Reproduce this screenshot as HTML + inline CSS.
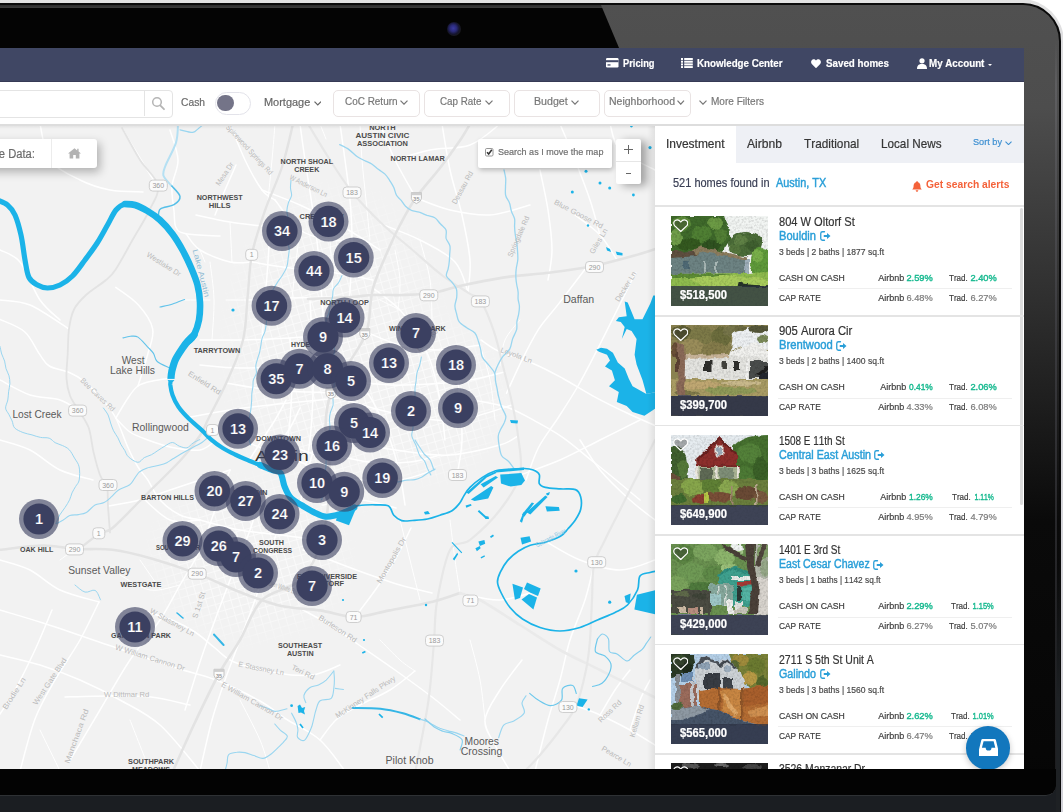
<!DOCTYPE html>
<html lang="en"><head><meta charset="utf-8"><title>Mashvisor – Austin, TX investment property search</title>
<style>
html,body{margin:0;padding:0}
body{width:1063px;height:812px;overflow:hidden;position:relative;background:#fff;font-family:"Liberation Sans",sans-serif}
.t{position:absolute;white-space:pre;line-height:1;font-kerning:none;display:block;-webkit-text-stroke:0.2px currentColor}
.a{position:absolute}
.btn{position:absolute;top:90px;height:25px;border:1px solid #e9e3e3;border-radius:5px;background:#fff}
</style></head><body>

<div class="a" style="left:-60px;top:-1px;width:1123.500px;height:830px;border-radius:0 43px 0 0;background:linear-gradient(#e2e2e2,#dadade 10%,#d2d2d8)"></div>
<div class="a" id="bezel" style="left:-60px;top:3px;width:1117px;height:860px;border:2px solid #0b0b0b;border-radius:0 38px 0 0;background:#040404;overflow:hidden">
  <div class="a" style="left:0;top:0;width:1117px;height:3px;background:linear-gradient(#2a2a2a,#3c3c3c)"></div>
  <svg class="a" style="left:0;top:0" width="1117" height="860" viewBox="-60 5 1117 860">
    <defs><linearGradient id="sheen" x1="0" y1="0" x2="0" y2="1">
      <stop offset="0" stop-color="#505050"/><stop offset="0.12" stop-color="#4d4d4d"/><stop offset="0.35" stop-color="#2e2e2e"/><stop offset="0.6" stop-color="#0a0a0a"/><stop offset="1" stop-color="#040404"/></linearGradient></defs>
    <polygon points="599,5 1060,5 1060,865 960,865" fill="url(#sheen)"/>
  </svg>
</div>
<div class="a" style="left:1054.500px;top:40px;width:2.500px;height:740px;background:linear-gradient(rgba(120,120,125,0),rgba(110,110,115,.5) 6%,rgba(70,70,76,.6) 40%,rgba(50,50,55,.5))"></div>

<div class="a" style="left:447px;top:22px;width:14px;height:14px;border-radius:50%;background:radial-gradient(circle at 45% 45%,#3a3aa0 0,#2a2a78 30%,#15152e 55%,#1a1a1a 75%,#0a0a0a 100%)"></div>
<div class="a" id="screen" style="left:0;top:48px;width:1024px;height:721px;background:#fff;overflow:hidden"></div>
<div class="a" style="left:0;top:48px;width:1024px;height:33px;background:#404764;border-bottom:1px solid #363a55"></div>
<div class="a" style="left:0;top:82px;width:1024px;height:42px;background:#fff"></div>
<div class="a" style="left:0;top:124px;width:655px;height:645px;background:#f1f1f1"></div>
<div class="a" style="left:655px;top:124px;width:369px;height:645px;background:#fff"></div>
<svg class="a" style="left:606px;top:58px" width="13" height="10" viewBox="0 0 13 10"><rect x="0" y="0" width="12.5" height="9.5" rx="1.2" fill="#fff"/><rect x="0" y="2.2" width="12.5" height="2" fill="#414866"/><rect x="1.5" y="6.3" width="3" height="1.3" fill="#414866"/></svg>
<span class="t" style="left:622.50px;top:58.27px;font-size:11.5px;font-weight:700;color:#fff;transform:scaleX(0.8080);transform-origin:0 0;">Pricing</span>
<svg class="a" style="left:681px;top:58px" width="12" height="10" viewBox="0 0 12 10" fill="#fff"><rect x="0" y="0" width="2" height="2"/><rect x="3.2" y="0" width="8.6" height="2"/><rect x="0" y="2.7" width="2" height="2"/><rect x="3.2" y="2.7" width="8.6" height="2"/><rect x="0" y="5.4" width="2" height="2"/><rect x="3.2" y="5.4" width="8.6" height="2"/><rect x="0" y="8.1" width="2" height="1.9"/><rect x="3.2" y="8.1" width="8.6" height="1.9"/></svg>
<span class="t" style="left:697.00px;top:58.27px;font-size:11.5px;font-weight:700;color:#fff;transform:scaleX(0.8468);transform-origin:0 0;">Knowledge Center</span>
<svg class="a" style="left:811px;top:58.5px" width="10" height="9.5" viewBox="0 0 20 19"><path d="M10 18.5 L1.6 10 C-0.8 7.2 0 3.2 2.6 1.4 C5 -0.2 8.2 0.4 10 3.2 C11.800 0.4 15 -0.2 17.4 1.4 C20 3.2 20.8 7.2 18.4 10 Z" fill="#fff"/></svg>
<span class="t" style="left:826.00px;top:58.27px;font-size:11.5px;font-weight:700;color:#fff;transform:scaleX(0.8496);transform-origin:0 0;">Saved homes</span>
<svg class="a" style="left:916.5px;top:57.5px" width="10" height="11" viewBox="0 0 20 22"><circle cx="10" cy="5.6" r="5.2" fill="#fff"/><path d="M0 22 C0 14.500 4 12.500 7 11.800 L13 11.800 C16 12.500 20 14.500 20 22 Z" fill="#fff"/></svg>
<span class="t" style="left:929.00px;top:58.27px;font-size:11.5px;font-weight:700;color:#fff;transform:scaleX(0.8494);transform-origin:0 0;">My Account</span>
<div class="a" style="left:987.5px;top:64px;width:0;height:0;border-left:2.5px solid transparent;border-right:2.5px solid transparent;border-top:2.5px solid #fff"></div>
<div class="a" style="left:0;top:123.500px;width:1024px;height:2px;background:#dddddd;z-index:3"></div><div class="a" style="left:0;top:125.500px;width:655px;height:3px;background:linear-gradient(rgba(0,0,0,.06),rgba(0,0,0,0));z-index:3"></div>
<div class="a" style="left:-10px;top:89.5px;width:181px;height:26px;border:1px solid #e4e4e4;border-radius:4px;background:#fff"></div>
<div class="a" style="left:144px;top:90px;width:1px;height:26px;background:#e4e4e4"></div>
<svg class="a" style="left:151px;top:96px" width="15" height="15" viewBox="0 0 15 15"><circle cx="6" cy="6" r="4.3" fill="none" stroke="#b5b5b5" stroke-width="1.5"/><path d="M9.200 9.400 L13 13.200" stroke="#b5b5b5" stroke-width="1.800" stroke-linecap="round"/></svg>
<span class="t" style="left:181.00px;top:96.97px;font-size:11.5px;font-weight:400;color:#6a6a6a;transform:scaleX(0.8935);transform-origin:0 0;">Cash</span>
<div class="a" style="left:215px;top:91.5px;width:34px;height:21px;border:1px solid #e3e3ea;border-radius:11.500px;background:#fff"></div>
<div class="a" style="left:217px;top:94.5px;width:16.500px;height:16.500px;border-radius:50%;background:#747488"></div>
<span class="t" style="left:263.75px;top:96.77px;font-size:11.5px;font-weight:400;color:#666;transform:scaleX(0.9518);transform-origin:0 0;">Mortgage</span>
<svg class="a" style="left:313.75px;top:101px" width="7.5" height="5" viewBox="0 0 7.5 5"><path d="M0.5 0.6 L3.75 4 L7.0 0.6" fill="none" stroke="#666" stroke-width="1.2"/></svg>
<div class="btn" style="left:333px;width:85px"></div>
<div class="btn" style="left:423.75px;width:84.5px"></div>
<div class="btn" style="left:514px;width:84px"></div>
<div class="btn" style="left:604px;width:85px"></div>
<span class="t" style="left:344.50px;top:96.49px;font-size:11px;font-weight:400;color:#777;transform:scaleX(0.9040);transform-origin:0 0;">CoC Return</span>
<svg class="a" style="left:400px;top:100px" width="8" height="5.2" viewBox="0 0 8 5.2"><path d="M0.5 0.6 L4.0 4.2 L7.5 0.6" fill="none" stroke="#777" stroke-width="1.2"/></svg>
<span class="t" style="left:439.50px;top:96.49px;font-size:11px;font-weight:400;color:#777;transform:scaleX(0.8928);transform-origin:0 0;">Cap Rate</span>
<svg class="a" style="left:484.5px;top:100px" width="8" height="5.2" viewBox="0 0 8 5.2"><path d="M0.5 0.6 L4.0 4.2 L7.5 0.6" fill="none" stroke="#777" stroke-width="1.2"/></svg>
<span class="t" style="left:533.75px;top:96.49px;font-size:11px;font-weight:400;color:#777;transform:scaleX(0.9677);transform-origin:0 0;">Budget</span>
<svg class="a" style="left:571px;top:100px" width="8" height="5.2" viewBox="0 0 8 5.2"><path d="M0.5 0.6 L4.0 4.2 L7.5 0.6" fill="none" stroke="#777" stroke-width="1.2"/></svg>
<span class="t" style="left:609.00px;top:96.49px;font-size:11px;font-weight:400;color:#777;transform:scaleX(0.9548);transform-origin:0 0;">Neighborhood</span>
<svg class="a" style="left:677px;top:100px" width="7.5" height="5.2" viewBox="0 0 7.5 5.2"><path d="M0.5 0.6 L3.75 4.2 L7.0 0.6" fill="none" stroke="#777" stroke-width="1.2"/></svg>
<svg class="a" style="left:699px;top:100px" width="8" height="5.2" viewBox="0 0 8 5.2"><path d="M0.5 0.6 L4.0 4.2 L7.5 0.6" fill="none" stroke="#777" stroke-width="1.2"/></svg>
<span class="t" style="left:711.00px;top:96.49px;font-size:11px;font-weight:400;color:#777;transform:scaleX(0.9128);transform-origin:0 0;">More Filters</span>
<svg class="a" style="left:0;top:124px" width="655" height="645" viewBox="0 124 655 645">
<rect x="0" y="124" width="655" height="645" fill="#f2f2f2"/>
<defs><pattern id="grid" width="8" height="8" patternUnits="userSpaceOnUse" patternTransform="rotate(-16)"><path d="M0 0.500 H8 M0.500 0 V8" stroke="#fff" stroke-width="0.900" fill="none"/></pattern><radialGradient id="gm1" cx="0.500" cy="0.500" r="0.500"><stop offset="0" stop-color="#fff" stop-opacity="1"/><stop offset="0.600" stop-color="#fff" stop-opacity="0.800"/><stop offset="1" stop-color="#fff" stop-opacity="0"/></radialGradient><mask id="gmask"><ellipse cx="335" cy="350" rx="120" ry="175" fill="url(#gm1)"/><ellipse cx="250" cy="560" rx="110" ry="90" fill="url(#gm1)"/><ellipse cx="430" cy="400" rx="80" ry="90" fill="url(#gm1)"/></mask></defs>
<rect x="0" y="124" width="655" height="645" fill="url(#grid)" mask="url(#gmask)" opacity="0.750"/>
<path d="M122.0 128.0 C124.2 131.7 130.2 142.0 135.0 150.0 C139.8 158.0 147.2 170.0 151.0 176.0 C154.8 182.0 156.8 184.3 158.0 186.0" fill="none" stroke="#fff" stroke-width="1.5" stroke-linecap="round" stroke-linejoin="round"/>
<path d="M220.0 236.0 C214.3 235.6 193.3 235.1 186.0 233.7 C178.7 232.3 178.0 231.3 176.0 227.5 C174.0 223.7 174.7 217.9 174.0 211.0 C173.3 204.1 171.3 194.5 172.0 186.0 C172.7 177.5 178.3 169.3 178.0 160.0 C177.7 150.7 171.3 135.0 170.0 130.0" fill="none" stroke="#fff" stroke-width="1.5" stroke-linecap="round" stroke-linejoin="round"/>
<path d="M186.0 233.7 C188.3 236.4 192.7 245.3 200.0 250.0 C207.3 254.7 221.3 260.0 230.0 262.0 C238.7 264.0 248.3 262.0 252.0 262.0" fill="none" stroke="#fff" stroke-width="1.5" stroke-linecap="round" stroke-linejoin="round"/>
<path d="M230.0 124.0 C232.5 130.0 239.7 149.0 245.0 160.0 C250.3 171.0 257.0 183.3 262.0 190.0 C267.0 196.7 272.8 198.3 275.0 200.0" fill="none" stroke="#fff" stroke-width="1.5" stroke-linecap="round" stroke-linejoin="round"/>
<path d="M236.0 165.0 C234.2 169.2 228.5 181.7 225.0 190.0 C221.5 198.3 216.7 210.8 215.0 215.0" fill="none" stroke="#fff" stroke-width="1.5" stroke-linecap="round" stroke-linejoin="round"/>
<path d="M196.0 215.0 C201.7 216.2 219.0 220.2 230.0 222.0 C241.0 223.8 256.7 225.3 262.0 226.0" fill="none" stroke="#fff" stroke-width="1.5" stroke-linecap="round" stroke-linejoin="round"/>
<path d="M262.0 190.0 C268.3 192.5 287.0 199.2 300.0 205.0 C313.0 210.8 326.7 217.5 340.0 225.0 C353.3 232.5 373.3 245.8 380.0 250.0" fill="none" stroke="#fff" stroke-width="1.5" stroke-linecap="round" stroke-linejoin="round"/>
<path d="M300.0 124.0 C300.8 130.0 303.0 146.5 305.0 160.0 C307.0 173.5 309.8 190.0 312.0 205.0 C314.2 220.0 316.3 234.2 318.0 250.0 C319.7 265.8 320.8 285.0 322.0 300.0 C323.2 315.0 324.5 333.3 325.0 340.0" fill="none" stroke="#fff" stroke-width="1.5" stroke-linecap="round" stroke-linejoin="round"/>
<path d="M340.0 124.0 C340.8 130.0 343.3 147.3 345.0 160.0 C346.7 172.7 348.8 186.7 350.0 200.0 C351.2 213.3 352.0 225.0 352.0 240.0 C352.0 255.0 351.2 275.0 350.0 290.0 C348.8 305.0 345.8 323.3 345.0 330.0" fill="none" stroke="#fff" stroke-width="1.5" stroke-linecap="round" stroke-linejoin="round"/>
<path d="M275.0 200.0 C279.2 205.0 290.8 223.3 300.0 230.0 C309.2 236.7 321.3 238.3 330.0 240.0 C338.7 241.7 348.3 240.0 352.0 240.0" fill="none" stroke="#fff" stroke-width="1.5" stroke-linecap="round" stroke-linejoin="round"/>
<path d="M252.0 262.0 C258.3 263.0 277.0 266.3 290.0 268.0 C303.0 269.7 316.2 270.0 330.0 272.0 C343.8 274.0 365.8 278.7 373.0 280.0" fill="none" stroke="#fff" stroke-width="1.5" stroke-linecap="round" stroke-linejoin="round"/>
<path d="M248.0 300.0 C255.0 299.7 276.3 298.5 290.0 298.0 C303.7 297.5 323.3 297.2 330.0 297.0" fill="none" stroke="#fff" stroke-width="1.5" stroke-linecap="round" stroke-linejoin="round"/>
<path d="M200.0 340.0 C207.2 340.0 228.0 340.3 243.0 340.0 C258.0 339.7 275.5 338.8 290.0 338.0 C304.5 337.2 317.3 336.0 330.0 335.0 C342.7 334.0 360.0 332.5 366.0 332.0" fill="none" stroke="#fff" stroke-width="1.5" stroke-linecap="round" stroke-linejoin="round"/>
<path d="M200.0 365.0 C206.7 365.5 225.0 367.8 240.0 368.0 C255.0 368.2 273.3 367.0 290.0 366.0 C306.7 365.0 331.7 362.7 340.0 362.0" fill="none" stroke="#fff" stroke-width="1.5" stroke-linecap="round" stroke-linejoin="round"/>
<path d="M226.0 383.0 C233.3 384.2 256.0 388.5 270.0 390.0 C284.0 391.5 299.8 391.5 310.0 392.0 C320.2 392.5 327.5 392.8 331.0 393.0" fill="none" stroke="#fff" stroke-width="1.5" stroke-linecap="round" stroke-linejoin="round"/>
<path d="M190.0 417.0 C196.7 415.8 216.7 412.0 230.0 410.0 C243.3 408.0 255.0 406.7 270.0 405.0 C285.0 403.3 308.3 401.2 320.0 400.0 C331.7 398.8 336.7 398.3 340.0 398.0" fill="none" stroke="#fff" stroke-width="1.5" stroke-linecap="round" stroke-linejoin="round"/>
<path d="M290.0 338.0 C290.3 345.0 292.0 366.3 292.0 380.0 C292.0 393.7 291.0 408.3 290.0 420.0 C289.0 431.7 286.7 445.0 286.0 450.0" fill="none" stroke="#fff" stroke-width="1.5" stroke-linecap="round" stroke-linejoin="round"/>
<path d="M310.0 300.0 C310.3 306.7 311.5 324.7 312.0 340.0 C312.5 355.3 313.3 375.3 313.0 392.0 C312.7 408.7 311.3 427.0 310.0 440.0 C308.7 453.0 305.8 465.0 305.0 470.0" fill="none" stroke="#fff" stroke-width="1.5" stroke-linecap="round" stroke-linejoin="round"/>
<path d="M270.0 226.0 C269.7 232.0 268.8 249.7 268.0 262.0 C267.2 274.3 266.0 287.0 265.0 300.0 C264.0 313.0 262.5 333.3 262.0 340.0" fill="none" stroke="#fff" stroke-width="1.5" stroke-linecap="round" stroke-linejoin="round"/>
<path d="M380.0 124.0 C382.5 130.0 389.0 147.7 395.0 160.0 C401.0 172.3 412.5 191.7 416.0 198.0" fill="none" stroke="#fff" stroke-width="1.5" stroke-linecap="round" stroke-linejoin="round"/>
<path d="M416.0 198.0 C421.7 200.0 437.7 207.2 450.0 210.0 C462.3 212.8 476.7 215.8 490.0 215.0 C503.3 214.2 523.3 206.7 530.0 205.0" fill="none" stroke="#fff" stroke-width="1.5" stroke-linecap="round" stroke-linejoin="round"/>
<path d="M395.0 160.0 C400.8 158.3 417.5 152.5 430.0 150.0 C442.5 147.5 458.3 149.3 470.0 145.0 C481.7 140.7 495.0 127.5 500.0 124.0" fill="none" stroke="#fff" stroke-width="1.5" stroke-linecap="round" stroke-linejoin="round"/>
<path d="M442.0 124.0 C443.3 131.7 446.7 154.8 450.0 170.0 C453.3 185.2 458.7 200.0 462.0 215.0 C465.3 230.0 469.0 247.2 470.0 260.0 C471.0 272.8 468.3 286.7 468.0 292.0" fill="none" stroke="#fff" stroke-width="1.5" stroke-linecap="round" stroke-linejoin="round"/>
<path d="M381.0 224.0 C387.5 226.7 407.7 233.7 420.0 240.0 C432.3 246.3 447.0 253.3 455.0 262.0 C463.0 270.7 465.8 287.0 468.0 292.0" fill="none" stroke="#fff" stroke-width="1.5" stroke-linecap="round" stroke-linejoin="round"/>
<path d="M373.0 288.0 C377.5 291.7 392.8 302.5 400.0 310.0 C407.2 317.5 411.0 324.7 416.0 333.0 C421.0 341.3 426.0 348.8 430.0 360.0 C434.0 371.2 437.5 386.7 440.0 400.0 C442.5 413.3 444.2 433.3 445.0 440.0" fill="none" stroke="#fff" stroke-width="1.5" stroke-linecap="round" stroke-linejoin="round"/>
<path d="M366.0 332.0 C371.7 334.2 387.7 342.0 400.0 345.0 C412.3 348.0 426.7 350.0 440.0 350.0 C453.3 350.0 473.3 345.8 480.0 345.0" fill="none" stroke="#fff" stroke-width="1.5" stroke-linecap="round" stroke-linejoin="round"/>
<path d="M350.0 381.0 C356.7 381.7 376.7 384.5 390.0 385.0 C403.3 385.5 416.7 384.8 430.0 384.0 C443.3 383.2 457.5 382.0 470.0 380.0 C482.5 378.0 499.2 373.3 505.0 372.0" fill="none" stroke="#fff" stroke-width="1.5" stroke-linecap="round" stroke-linejoin="round"/>
<path d="M340.0 398.0 C346.7 400.0 366.7 406.7 380.0 410.0 C393.3 413.3 406.7 416.3 420.0 418.0 C433.3 419.7 444.7 422.2 460.0 420.0 C475.3 417.8 503.3 407.5 512.0 405.0" fill="none" stroke="#fff" stroke-width="1.5" stroke-linecap="round" stroke-linejoin="round"/>
<path d="M331.0 430.0 C337.5 432.5 356.8 441.3 370.0 445.0 C383.2 448.7 396.7 450.3 410.0 452.0 C423.3 453.7 435.0 456.2 450.0 455.0 C465.0 453.8 488.7 448.2 500.0 445.0 C511.3 441.8 515.0 437.5 518.0 436.0" fill="none" stroke="#fff" stroke-width="1.5" stroke-linecap="round" stroke-linejoin="round"/>
<path d="M347.0 366.0 C351.2 371.7 364.8 387.7 372.0 400.0 C379.2 412.3 385.3 427.5 390.0 440.0 C394.7 452.5 397.5 464.2 400.0 475.0 C402.5 485.8 404.2 500.0 405.0 505.0" fill="none" stroke="#fff" stroke-width="1.5" stroke-linecap="round" stroke-linejoin="round"/>
<path d="M456.0 365.0 C456.7 370.8 459.0 387.5 460.0 400.0 C461.0 412.5 462.3 428.3 462.0 440.0 C461.7 451.7 458.7 465.0 458.0 470.0" fill="none" stroke="#fff" stroke-width="1.5" stroke-linecap="round" stroke-linejoin="round"/>
<path d="M540.0 170.0 C541.3 176.7 546.0 196.7 548.0 210.0 C550.0 223.3 552.0 238.3 552.0 250.0 C552.0 261.7 548.7 275.0 548.0 280.0" fill="none" stroke="#fff" stroke-width="1.5" stroke-linecap="round" stroke-linejoin="round"/>
<path d="M481.0 340.0 C484.0 341.9 490.2 347.4 499.0 351.4 C507.8 355.3 522.9 359.2 533.6 363.7 C544.3 368.2 553.1 373.1 563.0 378.5 C572.9 383.9 582.0 390.1 592.7 395.8 C603.4 401.6 615.8 407.7 627.0 413.0 C638.2 418.3 654.5 425.3 660.0 427.8" fill="none" stroke="#fff" stroke-width="1.5" stroke-linecap="round" stroke-linejoin="round"/>
<path d="M458.0 400.0 C461.2 400.1 468.5 399.4 477.0 400.7 C485.5 402.0 498.8 404.3 509.0 408.0 C519.2 411.7 529.5 418.0 538.5 422.9 C547.5 427.8 554.8 431.9 563.0 437.6 C571.2 443.3 579.6 450.7 587.8 457.3 C596.0 463.9 603.7 469.9 612.4 477.0 C621.1 484.1 635.4 496.2 640.0 500.0" fill="none" stroke="#fff" stroke-width="1.5" stroke-linecap="round" stroke-linejoin="round"/>
<path d="M636.0 273.0 C635.3 274.2 635.1 273.9 632.0 280.0 C628.9 286.1 623.0 298.1 617.3 309.6 C611.6 321.1 604.1 336.3 597.6 349.0 C591.1 361.7 584.6 374.5 578.0 386.0 C571.4 397.5 564.6 407.8 558.0 418.0 C551.4 428.2 543.8 437.2 538.5 447.5 C533.2 457.8 528.1 474.6 526.0 480.0" fill="none" stroke="#fff" stroke-width="1.5" stroke-linecap="round" stroke-linejoin="round"/>
<path d="M586.0 268.0 C581.3 274.1 565.9 294.4 558.0 304.6 C550.1 314.8 544.6 319.9 538.5 329.3 C532.4 338.8 526.6 350.6 521.3 361.3 C516.0 372.0 509.0 388.0 506.5 393.3" fill="none" stroke="#fff" stroke-width="1.5" stroke-linecap="round" stroke-linejoin="round"/>
<path d="M575.0 215.0 C579.2 218.3 593.0 227.5 600.0 235.0 C607.0 242.5 614.2 255.8 617.0 260.0" fill="none" stroke="#fff" stroke-width="1.5" stroke-linecap="round" stroke-linejoin="round"/>
<path d="M560.0 124.0 C562.5 130.0 570.0 147.3 575.0 160.0 C580.0 172.7 585.8 187.5 590.0 200.0 C594.2 212.5 598.3 229.2 600.0 235.0" fill="none" stroke="#fff" stroke-width="1.5" stroke-linecap="round" stroke-linejoin="round"/>
<path d="M610.0 124.0 C611.7 128.3 612.5 142.3 620.0 150.0 C627.5 157.7 649.2 166.7 655.0 170.0" fill="none" stroke="#fff" stroke-width="1.5" stroke-linecap="round" stroke-linejoin="round"/>
<path d="M520.0 475.0 C526.7 472.5 546.7 465.8 560.0 460.0 C573.3 454.2 586.7 446.7 600.0 440.0 C613.3 433.3 633.3 423.3 640.0 420.0" fill="none" stroke="#fff" stroke-width="1.5" stroke-linecap="round" stroke-linejoin="round"/>
<path d="M580.0 440.0 C583.3 445.0 591.7 460.0 600.0 470.0 C608.3 480.0 620.8 491.7 630.0 500.0 C639.2 508.3 650.8 516.7 655.0 520.0" fill="none" stroke="#fff" stroke-width="1.5" stroke-linecap="round" stroke-linejoin="round"/>
<path d="M545.0 541.0 C550.8 544.2 567.5 555.2 580.0 560.0 C592.5 564.8 607.5 570.0 620.0 570.0 C632.5 570.0 649.2 561.7 655.0 560.0" fill="none" stroke="#fff" stroke-width="1.5" stroke-linecap="round" stroke-linejoin="round"/>
<path d="M250.0 459.0 C252.0 455.8 257.8 446.5 262.0 440.0 C266.2 433.5 271.0 426.7 275.0 420.0 C279.0 413.3 284.2 403.3 286.0 400.0" fill="none" stroke="#fff" stroke-width="1.5" stroke-linecap="round" stroke-linejoin="round"/>
<path d="M262.0 470.0 C264.2 466.7 270.3 457.0 275.0 450.0 C279.7 443.0 285.8 435.0 290.0 428.0 C294.2 421.0 298.3 411.3 300.0 408.0" fill="none" stroke="#fff" stroke-width="1.5" stroke-linecap="round" stroke-linejoin="round"/>
<path d="M240.0 440.0 C243.7 441.3 253.7 445.0 262.0 448.0 C270.3 451.0 280.3 454.3 290.0 458.0 C299.7 461.7 315.0 468.0 320.0 470.0" fill="none" stroke="#fff" stroke-width="1.5" stroke-linecap="round" stroke-linejoin="round"/>
<path d="M232.0 430.0 C236.3 431.0 248.3 433.3 258.0 436.0 C267.7 438.7 278.8 442.3 290.0 446.0 C301.2 449.7 319.2 456.0 325.0 458.0" fill="none" stroke="#fff" stroke-width="1.5" stroke-linecap="round" stroke-linejoin="round"/>
<path d="M300.0 505.0 C300.8 500.8 303.0 488.3 305.0 480.0 C307.0 471.7 309.8 463.3 312.0 455.0 C314.2 446.7 317.0 434.2 318.0 430.0" fill="none" stroke="#fff" stroke-width="1.5" stroke-linecap="round" stroke-linejoin="round"/>
<path d="M330.0 475.0 C335.0 475.8 348.3 479.2 360.0 480.0 C371.7 480.8 387.7 481.7 400.0 480.0 C412.3 478.3 428.3 471.7 434.0 470.0" fill="none" stroke="#fff" stroke-width="1.5" stroke-linecap="round" stroke-linejoin="round"/>
<path d="M322.0 505.0 C328.3 504.2 347.7 499.5 360.0 500.0 C372.3 500.5 390.0 506.7 396.0 508.0" fill="none" stroke="#fff" stroke-width="1.5" stroke-linecap="round" stroke-linejoin="round"/>
<path d="M335.0 455.0 C340.8 456.2 357.5 460.8 370.0 462.0 C382.5 463.2 398.3 463.2 410.0 462.0 C421.7 460.8 435.0 456.2 440.0 455.0" fill="none" stroke="#fff" stroke-width="1.5" stroke-linecap="round" stroke-linejoin="round"/>
<path d="M286.0 485.0 C285.0 490.8 283.0 507.5 280.0 520.0 C277.0 532.5 272.2 546.7 268.0 560.0 C263.8 573.3 259.7 586.7 255.0 600.0 C250.3 613.3 245.0 626.7 240.0 640.0 C235.0 653.3 229.7 666.7 225.0 680.0 C220.3 693.3 216.2 704.8 212.0 720.0 C207.8 735.2 202.0 762.5 200.0 771.0" fill="none" stroke="#fff" stroke-width="1.5" stroke-linecap="round" stroke-linejoin="round"/>
<path d="M262.0 490.0 C260.0 496.7 255.0 515.8 250.0 530.0 C245.0 544.2 237.8 560.0 232.0 575.0 C226.2 590.0 220.3 605.5 215.0 620.0 C209.7 634.5 205.0 647.0 200.0 662.0 C195.0 677.0 187.5 702.0 185.0 710.0" fill="none" stroke="#fff" stroke-width="1.5" stroke-linecap="round" stroke-linejoin="round"/>
<path d="M230.0 470.0 C227.5 476.7 220.0 496.7 215.0 510.0 C210.0 523.3 205.8 537.5 200.0 550.0 C194.2 562.5 186.7 573.3 180.0 585.0 C173.3 596.7 168.3 607.5 160.0 620.0 C151.7 632.5 140.0 645.0 130.0 660.0 C120.0 675.0 110.2 693.0 100.0 710.0 C89.8 727.0 74.2 753.3 69.0 762.0" fill="none" stroke="#fff" stroke-width="1.5" stroke-linecap="round" stroke-linejoin="round"/>
<path d="M200.0 520.0 C206.7 521.7 226.7 527.5 240.0 530.0 C253.3 532.5 266.3 533.3 280.0 535.0 C293.7 536.7 315.0 539.2 322.0 540.0" fill="none" stroke="#fff" stroke-width="1.5" stroke-linecap="round" stroke-linejoin="round"/>
<path d="M303.0 550.0 C307.5 551.7 320.7 556.5 330.0 560.0 C339.3 563.5 347.3 566.8 359.0 571.0 C370.7 575.2 387.8 581.3 400.0 585.0 C412.2 588.7 426.7 591.7 432.0 593.0" fill="none" stroke="#fff" stroke-width="1.5" stroke-linecap="round" stroke-linejoin="round"/>
<path d="M411.0 528.0 C408.3 533.3 400.8 549.8 395.0 560.0 C389.2 570.2 382.7 579.5 376.0 589.0 C369.3 598.5 358.5 612.3 355.0 617.0" fill="none" stroke="#fff" stroke-width="1.5" stroke-linecap="round" stroke-linejoin="round"/>
<path d="M303.0 610.0 C307.5 612.5 320.7 619.2 330.0 625.0 C339.3 630.8 348.2 637.5 359.0 645.0 C369.8 652.5 382.8 661.3 395.0 670.0 C407.2 678.7 421.2 688.7 432.0 697.0 C442.8 705.3 455.3 716.2 460.0 720.0" fill="none" stroke="#fff" stroke-width="1.5" stroke-linecap="round" stroke-linejoin="round"/>
<path d="M147.0 612.0 C151.2 613.3 164.0 616.7 172.0 620.0 C180.0 623.3 187.8 627.3 195.0 632.0 C202.2 636.7 208.5 643.0 215.0 648.0 C221.5 653.0 223.7 657.8 234.0 662.0 C244.3 666.2 264.0 670.8 277.0 673.0 C290.0 675.2 301.5 676.3 312.0 675.0 C322.5 673.7 335.3 666.7 340.0 665.0" fill="none" stroke="#fff" stroke-width="1.5" stroke-linecap="round" stroke-linejoin="round"/>
<path d="M0.0 610.0 C7.2 612.2 25.0 617.2 43.0 623.0 C61.0 628.8 86.3 637.7 108.0 645.0 C129.7 652.3 155.0 661.2 173.0 667.0 C191.0 672.8 201.5 674.3 216.0 680.0 C230.5 685.7 248.3 694.5 260.0 701.0 C271.7 707.5 276.0 712.5 286.0 719.0 C296.0 725.5 310.2 731.3 320.0 740.0 C329.8 748.7 340.8 765.8 345.0 771.0" fill="none" stroke="#fff" stroke-width="1.5" stroke-linecap="round" stroke-linejoin="round"/>
<path d="M65.0 697.0 C72.5 696.8 95.7 696.0 110.0 696.0 C124.3 696.0 137.7 695.5 151.0 697.0 C164.3 698.5 183.5 703.7 190.0 705.0" fill="none" stroke="#fff" stroke-width="1.5" stroke-linecap="round" stroke-linejoin="round"/>
<path d="M99.0 602.0 C95.8 608.3 87.3 627.0 80.0 640.0 C72.7 653.0 62.5 666.8 55.0 680.0 C47.5 693.2 40.8 703.8 35.0 719.0 C29.2 734.2 22.5 762.3 20.0 771.0" fill="none" stroke="#fff" stroke-width="1.5" stroke-linecap="round" stroke-linejoin="round"/>
<path d="M52.0 610.0 C49.2 616.7 41.2 636.7 35.0 650.0 C28.8 663.3 20.8 679.3 15.0 690.0 C9.2 700.7 2.5 710.0 0.0 714.0" fill="none" stroke="#fff" stroke-width="1.5" stroke-linecap="round" stroke-linejoin="round"/>
<path d="M0.0 655.0 C6.7 656.7 26.7 660.8 40.0 665.0 C53.3 669.2 66.7 674.2 80.0 680.0 C93.3 685.8 106.7 692.5 120.0 700.0 C133.3 707.5 146.7 713.2 160.0 725.0 C173.3 736.8 193.3 763.3 200.0 771.0" fill="none" stroke="#fff" stroke-width="1.5" stroke-linecap="round" stroke-linejoin="round"/>
<path d="M415.0 671.0 C410.8 674.2 399.2 684.3 390.0 690.0 C380.8 695.7 368.8 700.2 360.0 705.0 C351.2 709.8 343.7 713.2 337.0 719.0 C330.3 724.8 322.8 736.5 320.0 740.0" fill="none" stroke="#fff" stroke-width="1.5" stroke-linecap="round" stroke-linejoin="round"/>
<path d="M460.0 593.0 C466.7 594.2 486.7 600.5 500.0 600.0 C513.3 599.5 533.3 591.7 540.0 590.0" fill="none" stroke="#fff" stroke-width="1.5" stroke-linecap="round" stroke-linejoin="round"/>
<path d="M594.0 565.0 C592.5 570.8 589.0 587.5 585.0 600.0 C581.0 612.5 574.2 626.7 570.0 640.0 C565.8 653.3 563.7 666.7 560.0 680.0 C556.3 693.3 552.2 704.8 548.0 720.0 C543.8 735.2 537.2 762.5 535.0 771.0" fill="none" stroke="#fff" stroke-width="1.5" stroke-linecap="round" stroke-linejoin="round"/>
<path d="M576.0 706.0 C580.0 707.5 591.0 711.0 600.0 715.0 C609.0 719.0 620.8 725.0 630.0 730.0 C639.2 735.0 650.8 742.5 655.0 745.0" fill="none" stroke="#fff" stroke-width="1.5" stroke-linecap="round" stroke-linejoin="round"/>
<path d="M600.0 715.0 C602.5 710.8 610.0 697.5 615.0 690.0 C620.0 682.5 627.5 673.3 630.0 670.0" fill="none" stroke="#fff" stroke-width="1.5" stroke-linecap="round" stroke-linejoin="round"/>
<path d="M630.0 730.0 C631.7 725.0 636.7 708.3 640.0 700.0 C643.3 691.7 648.3 683.3 650.0 680.0" fill="none" stroke="#fff" stroke-width="1.5" stroke-linecap="round" stroke-linejoin="round"/>
<path d="M522.0 660.0 C518.3 665.0 506.2 680.0 500.0 690.0 C493.8 700.0 485.8 710.8 485.0 720.0 C484.2 729.2 490.8 736.5 495.0 745.0 C499.2 753.5 507.5 766.7 510.0 771.0" fill="none" stroke="#fff" stroke-width="1.5" stroke-linecap="round" stroke-linejoin="round"/>
<path d="M0.0 319.4 C4.1 321.4 18.0 325.9 24.6 331.7 C31.2 337.4 35.3 348.2 39.4 353.9 C43.5 359.6 44.4 362.9 49.3 366.0 C54.2 369.1 63.3 369.9 69.0 372.4 C74.7 374.9 78.0 376.3 83.7 381.0 C89.4 385.7 98.1 394.5 103.4 400.7 C108.8 406.9 111.7 410.2 115.8 418.0 C119.9 425.8 124.3 439.3 128.0 447.5 C131.7 455.7 134.7 461.6 138.0 467.0 C141.3 472.4 144.1 474.5 147.8 480.0 C151.5 485.5 154.6 494.2 160.0 500.0 C165.4 505.8 173.3 511.7 180.0 515.0 C186.7 518.3 196.7 519.2 200.0 520.0" fill="none" stroke="#fff" stroke-width="1.5" stroke-linecap="round" stroke-linejoin="round"/>
<path d="M115.8 418.0 C117.8 414.7 124.3 403.3 128.0 398.0 C131.7 392.7 133.9 388.8 138.0 386.0 C142.1 383.2 147.4 382.2 152.7 381.0 C158.0 379.8 167.1 378.9 170.0 378.5" fill="none" stroke="#fff" stroke-width="1.5" stroke-linecap="round" stroke-linejoin="round"/>
<path d="M115.8 418.0 C118.2 420.3 124.7 428.3 130.0 432.0 C135.3 435.7 140.7 437.4 147.8 440.0 C154.9 442.6 163.7 445.8 172.4 447.5 C181.1 449.2 192.9 451.1 200.0 450.0 C207.1 448.9 212.5 442.5 215.0 441.0" fill="none" stroke="#fff" stroke-width="1.5" stroke-linecap="round" stroke-linejoin="round"/>
<path d="M138.0 386.0 C139.6 380.7 145.4 363.5 147.8 354.0 C150.2 344.5 154.3 337.2 152.7 329.0 C151.1 320.8 144.2 311.5 138.0 304.6 C131.8 297.7 119.5 290.3 115.8 287.4" fill="none" stroke="#fff" stroke-width="1.5" stroke-linecap="round" stroke-linejoin="round"/>
<path d="M0.0 380.0 C5.0 382.5 20.0 391.7 30.0 395.0 C40.0 398.3 51.9 397.4 60.0 400.0 C68.1 402.6 75.7 408.8 78.8 410.5" fill="none" stroke="#fff" stroke-width="1.5" stroke-linecap="round" stroke-linejoin="round"/>
<path d="M0.0 440.0 C5.0 441.7 20.0 445.0 30.0 450.0 C40.0 455.0 49.5 465.0 60.0 470.0 C70.5 475.0 87.5 478.3 93.0 480.0" fill="none" stroke="#fff" stroke-width="1.5" stroke-linecap="round" stroke-linejoin="round"/>
<path d="M0.0 560.0 C5.0 561.7 20.0 565.0 30.0 570.0 C40.0 575.0 48.5 584.7 60.0 590.0 C71.5 595.3 92.5 600.0 99.0 602.0" fill="none" stroke="#fff" stroke-width="1.5" stroke-linecap="round" stroke-linejoin="round"/>
<path d="M0.0 300.0 C5.0 300.8 18.5 300.2 30.0 305.0 C41.5 309.8 62.5 325.0 69.0 329.0" fill="none" stroke="#fff" stroke-width="1.5" stroke-linecap="round" stroke-linejoin="round"/>
<path d="M108.0 506.0 C113.3 505.0 129.7 502.7 140.0 500.0 C150.3 497.3 160.0 493.3 170.0 490.0 C180.0 486.7 190.0 483.3 200.0 480.0 C210.0 476.7 225.0 471.7 230.0 470.0" fill="none" stroke="#fff" stroke-width="1.5" stroke-linecap="round" stroke-linejoin="round"/>
<path d="M143.0 498.0 C147.5 501.7 160.5 516.3 170.0 520.0 C179.5 523.7 195.0 520.0 200.0 520.0" fill="none" stroke="#fff" stroke-width="1.5" stroke-linecap="round" stroke-linejoin="round"/>
<path d="M0.0 250.0 C3.3 252.0 13.3 253.7 20.0 262.0 C26.7 270.3 33.3 290.3 40.0 300.0 C46.7 309.7 56.7 316.7 60.0 320.0" fill="none" stroke="#fff" stroke-width="1.5" stroke-linecap="round" stroke-linejoin="round"/>
<path d="M40.0 124.0 C41.7 130.0 43.3 150.7 50.0 160.0 C56.7 169.3 70.0 175.0 80.0 180.0 C90.0 185.0 99.5 188.0 110.0 190.0 C120.5 192.0 137.5 191.7 143.0 192.0" fill="none" stroke="#fff" stroke-width="1.5" stroke-linecap="round" stroke-linejoin="round"/>
<path d="M275.0 124.0 C274.5 130.0 273.2 147.3 272.0 160.0 C270.8 172.7 268.7 193.3 268.0 200.0" fill="none" stroke="#fff" stroke-width="1.0" stroke-linecap="round" stroke-linejoin="round"/>
<path d="M320.0 124.0 C321.0 126.5 325.0 136.5 326.0 139.0" fill="none" stroke="#fff" stroke-width="1.0" stroke-linecap="round" stroke-linejoin="round"/>
<path d="M360.0 124.0 C360.3 130.0 361.0 147.3 362.0 160.0 C363.0 172.7 364.7 186.7 366.0 200.0 C367.3 213.3 369.3 233.3 370.0 240.0" fill="none" stroke="#fff" stroke-width="1.0" stroke-linecap="round" stroke-linejoin="round"/>
<path d="M395.0 250.0 C395.8 255.0 399.5 270.0 400.0 280.0 C400.5 290.0 398.3 305.0 398.0 310.0" fill="none" stroke="#fff" stroke-width="1.0" stroke-linecap="round" stroke-linejoin="round"/>
<path d="M420.0 240.0 C421.7 246.7 428.0 266.7 430.0 280.0 C432.0 293.3 431.7 313.3 432.0 320.0" fill="none" stroke="#fff" stroke-width="1.0" stroke-linecap="round" stroke-linejoin="round"/>
<path d="M300.0 230.0 C299.3 235.3 297.3 250.7 296.0 262.0 C294.7 273.3 292.7 292.0 292.0 298.0" fill="none" stroke="#fff" stroke-width="1.0" stroke-linecap="round" stroke-linejoin="round"/>
<path d="M330.0 240.0 C330.3 245.3 331.5 262.0 332.0 272.0 C332.5 282.0 332.8 295.3 333.0 300.0" fill="none" stroke="#fff" stroke-width="1.0" stroke-linecap="round" stroke-linejoin="round"/>
<path d="M380.0 300.0 C383.3 301.7 396.7 308.3 400.0 310.0" fill="none" stroke="#fff" stroke-width="1.0" stroke-linecap="round" stroke-linejoin="round"/>
<path d="M480.0 345.0 C481.7 350.8 487.5 367.5 490.0 380.0 C492.5 392.5 494.2 413.3 495.0 420.0" fill="none" stroke="#fff" stroke-width="1.0" stroke-linecap="round" stroke-linejoin="round"/>
<path d="M520.0 320.0 C517.5 323.3 508.3 332.3 505.0 340.0 C501.7 347.7 500.8 361.7 500.0 366.0" fill="none" stroke="#fff" stroke-width="1.0" stroke-linecap="round" stroke-linejoin="round"/>
<path d="M230.0 222.0 C230.3 228.7 231.7 255.3 232.0 262.0" fill="none" stroke="#fff" stroke-width="1.0" stroke-linecap="round" stroke-linejoin="round"/>
<path d="M210.0 262.0 C210.7 268.3 213.7 287.0 214.0 300.0 C214.3 313.0 212.3 333.3 212.0 340.0" fill="none" stroke="#fff" stroke-width="1.0" stroke-linecap="round" stroke-linejoin="round"/>
<path d="M226.0 300.0 C229.7 300.0 244.3 300.0 248.0 300.0" fill="none" stroke="#fff" stroke-width="1.0" stroke-linecap="round" stroke-linejoin="round"/>
<path d="M180.0 300.0 C185.0 300.0 205.0 300.0 210.0 300.0" fill="none" stroke="#fff" stroke-width="1.0" stroke-linecap="round" stroke-linejoin="round"/>
<path d="M205.0 262.0 C204.2 260.0 200.8 252.0 200.0 250.0" fill="none" stroke="#fff" stroke-width="1.0" stroke-linecap="round" stroke-linejoin="round"/>
<path d="M400.0 520.0 C401.7 526.7 406.7 546.7 410.0 560.0 C413.3 573.3 418.3 593.3 420.0 600.0" fill="none" stroke="#fff" stroke-width="1.0" stroke-linecap="round" stroke-linejoin="round"/>
<path d="M450.0 520.0 C450.8 526.7 453.3 547.8 455.0 560.0 C456.7 572.2 459.2 587.5 460.0 593.0" fill="none" stroke="#fff" stroke-width="1.0" stroke-linecap="round" stroke-linejoin="round"/>
<path d="M140.0 560.0 C143.3 564.8 156.7 584.2 160.0 589.0" fill="none" stroke="#fff" stroke-width="1.0" stroke-linecap="round" stroke-linejoin="round"/>
<path d="M120.0 575.0 C125.0 577.5 140.0 588.3 150.0 590.0 C160.0 591.7 175.0 585.8 180.0 585.0" fill="none" stroke="#fff" stroke-width="1.0" stroke-linecap="round" stroke-linejoin="round"/>
<path d="M60.0 560.0 C62.5 558.2 72.5 550.8 75.0 549.0" fill="none" stroke="#fff" stroke-width="1.0" stroke-linecap="round" stroke-linejoin="round"/>
<path d="M240.0 700.0 C243.3 706.7 255.0 728.2 260.0 740.0 C265.0 751.8 268.3 765.8 270.0 771.0" fill="none" stroke="#fff" stroke-width="1.0" stroke-linecap="round" stroke-linejoin="round"/>
<path d="M130.0 720.0 C133.3 728.5 146.7 762.5 150.0 771.0" fill="none" stroke="#fff" stroke-width="1.0" stroke-linecap="round" stroke-linejoin="round"/>
<path d="M40.0 730.0 C43.3 736.8 56.7 764.2 60.0 771.0" fill="none" stroke="#fff" stroke-width="1.0" stroke-linecap="round" stroke-linejoin="round"/>
<path d="M380.0 640.0 C383.3 643.3 394.2 654.8 400.0 660.0 C405.8 665.2 412.5 669.2 415.0 671.0" fill="none" stroke="#fff" stroke-width="1.0" stroke-linecap="round" stroke-linejoin="round"/>
<path d="M470.0 640.0 C471.7 646.7 477.5 666.7 480.0 680.0 C482.5 693.3 484.2 713.3 485.0 720.0" fill="none" stroke="#fff" stroke-width="1.0" stroke-linecap="round" stroke-linejoin="round"/>
<path d="M293.0 124.0 C291.2 131.2 286.7 152.6 282.0 167.0 C277.3 181.4 270.0 196.0 265.0 210.5 C260.0 225.0 254.9 239.6 252.0 254.0 C249.1 268.4 249.1 282.7 247.6 297.0 C246.1 311.3 246.6 325.6 243.0 340.0 C239.4 354.4 231.7 370.6 226.0 383.6 C220.3 396.6 213.0 409.4 208.7 418.0 C204.4 426.6 204.5 428.7 200.0 435.5 C195.5 442.3 191.2 448.6 181.7 459.0 C172.2 469.4 154.3 486.5 142.8 498.0 C131.3 509.5 119.7 522.1 112.5 528.0 C105.3 533.9 105.2 529.8 99.5 533.4 C93.8 537.0 81.6 547.1 78.0 549.8" fill="none" stroke="#e3e3e3" stroke-width="2.4" stroke-linecap="round" stroke-linejoin="round"/>
<path d="M122.0 128.0 C125.0 133.3 134.0 150.4 140.0 160.0 C146.0 169.6 156.5 177.0 158.0 185.5 C159.5 194.0 153.2 201.9 149.0 211.0 C144.8 220.1 138.0 230.3 132.5 240.0 C127.0 249.7 120.4 262.3 116.0 269.0 C111.6 275.7 111.0 275.7 106.0 280.0 C101.0 284.3 91.3 290.1 86.0 295.0 C80.7 299.9 76.8 303.8 74.0 309.5 C71.2 315.2 70.0 321.6 69.0 329.0 C68.0 336.4 68.1 345.8 67.7 354.0 C67.3 362.2 66.1 371.6 66.5 378.5 C66.9 385.4 68.0 390.4 70.0 395.7 C72.0 401.0 75.7 405.1 78.8 410.5 C81.9 415.9 86.2 420.8 88.7 427.8 C91.2 434.8 91.7 444.5 93.6 452.4 C95.5 460.3 97.8 469.2 100.0 475.0 C102.2 480.8 105.7 481.8 107.0 487.0 C108.3 492.2 107.5 498.9 108.0 506.5 C108.5 514.1 109.7 528.2 110.0 532.5" fill="none" stroke="#e3e3e3" stroke-width="1.8000000000000003" stroke-linecap="round" stroke-linejoin="round"/>
<path d="M308.0 124.0 C311.7 130.0 322.7 148.7 330.0 160.0 C337.3 171.3 343.4 181.4 352.0 192.0 C360.6 202.6 371.7 213.9 381.7 223.5 C391.7 233.1 401.9 240.8 412.0 249.5 C422.1 258.2 432.9 268.3 442.3 275.5 C451.7 282.7 461.9 288.5 468.3 292.8 C474.8 297.1 476.7 294.9 481.0 301.4 C485.3 307.9 490.3 320.9 494.0 331.7 C497.7 342.5 500.1 354.4 503.0 366.0 C505.9 377.6 509.1 389.4 511.6 401.0 C514.1 412.6 516.6 423.3 518.0 435.6 C519.4 447.9 523.0 462.6 520.0 475.0 C517.0 487.4 508.3 499.2 500.0 510.0 C491.7 520.8 478.3 533.3 470.0 540.0 C461.7 546.7 455.5 539.7 450.0 550.0 C444.5 560.3 439.7 586.5 437.0 601.7 C434.3 617.0 435.4 625.0 434.0 641.5 C432.6 658.0 431.5 679.4 428.4 701.0 C425.3 722.6 417.6 759.3 415.4 771.0" fill="none" stroke="#e7e7e7" stroke-width="2.2" stroke-linecap="round" stroke-linejoin="round"/>
<path d="M470.0 124.0 C468.3 126.8 464.6 133.7 459.6 141.0 C454.6 148.3 447.3 158.6 440.0 168.0 C432.7 177.4 422.7 188.1 416.0 197.6 C409.3 207.1 404.3 217.1 400.0 225.0 C395.7 232.9 394.9 234.4 390.4 245.0 C385.9 255.6 377.0 273.9 373.0 288.4 C369.0 302.8 370.9 318.8 366.6 331.7 C362.3 344.6 352.9 355.8 347.0 366.0 C341.1 376.2 334.6 382.8 331.0 393.0 C327.4 403.2 325.7 413.3 325.5 427.0 C325.3 440.7 330.6 456.2 330.0 475.0 C329.4 493.8 327.0 522.5 322.0 540.0 C317.0 557.5 310.0 570.0 300.0 580.0 C290.0 590.0 272.0 590.0 262.0 600.0 C252.0 610.0 247.1 627.8 240.0 640.0 C232.9 652.2 227.0 659.2 219.4 673.0 C211.8 686.8 202.4 706.7 194.7 723.0 C187.0 739.3 176.6 763.0 173.0 771.0" fill="none" stroke="#e3e3e3" stroke-width="2.6" stroke-linecap="round" stroke-linejoin="round"/>
<path d="M660.0 247.3 C655.5 248.8 644.5 252.8 632.7 256.0 C620.9 259.2 603.9 264.0 589.4 266.8 C574.9 269.6 560.4 271.2 546.0 273.0 C531.6 274.8 517.4 275.4 503.0 277.6 C488.6 279.8 471.2 283.5 459.6 286.0 C448.1 288.5 443.1 291.3 433.7 292.8 C424.3 294.3 413.5 294.6 403.4 295.0 C393.3 295.4 381.6 294.7 373.0 295.0 C364.4 295.3 362.3 296.3 351.5 297.0 C340.7 297.7 315.2 298.7 308.0 299.0" fill="none" stroke="#e3e3e3" stroke-width="2.6" stroke-linecap="round" stroke-linejoin="round"/>
<path d="M0.0 549.8 C7.2 549.1 30.4 545.6 43.0 545.5 C55.6 545.4 64.1 548.3 75.7 549.0 C87.3 549.7 99.9 548.2 112.5 549.8 C125.1 551.4 137.3 554.5 151.4 558.5 C165.5 562.5 181.8 567.9 197.0 573.6 C212.2 579.4 228.2 587.6 242.3 593.0 C256.4 598.4 268.3 603.1 281.3 606.0 C294.3 608.9 307.9 608.6 320.2 610.4 C332.4 612.2 343.3 617.0 354.8 617.0 C366.3 617.0 376.4 612.9 389.4 610.4 C402.4 607.9 420.9 604.6 432.7 601.7 C444.5 598.8 455.4 594.5 460.0 593.0" fill="none" stroke="#e3e3e3" stroke-width="2.6" stroke-linecap="round" stroke-linejoin="round"/>
<path d="M460.0 593.0 C463.3 594.2 470.0 594.7 480.0 600.0 C490.0 605.3 506.7 616.7 520.0 625.0 C533.3 633.3 546.7 642.5 560.0 650.0 C573.3 657.5 586.7 663.3 600.0 670.0 C613.3 676.7 630.0 685.0 640.0 690.0 C650.0 695.0 656.7 698.3 660.0 700.0" fill="none" stroke="#eaeaea" stroke-width="2.6" stroke-linecap="round" stroke-linejoin="round"/>
<path d="M655.0 440.0 C652.5 445.0 645.8 458.3 640.0 470.0 C634.2 481.7 625.8 498.3 620.0 510.0 C614.2 521.7 609.3 530.8 605.0 540.0 C600.7 549.2 596.2 555.0 594.0 565.0 C591.8 575.0 592.7 587.5 592.0 600.0 C591.3 612.5 591.0 628.3 590.0 640.0 C589.0 651.7 588.3 659.0 586.0 670.0 C583.7 681.0 580.3 696.0 576.0 706.0 C571.7 716.0 566.0 721.8 560.0 730.0 C554.0 738.2 545.8 748.2 540.0 755.0 C534.2 761.8 527.5 768.3 525.0 771.0" fill="none" stroke="#e7e7e7" stroke-width="2.2" stroke-linecap="round" stroke-linejoin="round"/>
<path d="M178.0 124.0 C177.7 127.1 178.1 135.7 176.0 142.6 C173.9 149.5 167.7 159.9 165.6 165.4 C163.5 170.9 162.5 172.4 163.5 175.8 C164.5 179.2 170.4 184.3 171.8 186.0" fill="none" stroke="#b5e0f3" stroke-width="2.0" stroke-linecap="round" stroke-linejoin="round" />
<path d="M204.0 124.0 C203.1 124.7 200.4 127.0 198.5 128.4 C196.6 129.8 195.8 132.1 192.8 132.4 C189.7 132.6 182.2 130.2 180.0 129.8" fill="none" stroke="#9ad6f0" stroke-width="1.2" stroke-linecap="round" stroke-linejoin="round" />
<path d="M171.8 186.0 C173.2 187.8 179.6 193.4 180.0 196.5 C180.4 199.6 177.3 202.6 174.0 204.7 C170.7 206.8 163.0 206.9 160.4 209.0 C157.8 211.1 158.7 215.7 158.4 217.0" fill="none" stroke="#55bfe8" stroke-width="1.5" stroke-linecap="round" stroke-linejoin="round" />
<path d="M339.7 144.6 C341.2 145.4 346.1 147.6 349.0 149.6 C351.9 151.6 354.4 154.7 357.0 156.5 C359.5 158.4 361.9 159.3 364.4 160.5 C366.9 161.8 369.7 162.7 372.1 164.2 C374.4 165.7 376.5 167.9 378.7 169.5 C380.8 171.2 383.1 172.3 385.0 174.1 C386.8 175.9 388.1 178.1 389.6 180.3 C391.0 182.6 392.6 185.0 393.8 187.5 C394.9 190.0 395.3 193.1 396.5 195.3 C397.7 197.4 399.7 198.6 401.2 200.4 C402.7 202.3 403.8 204.6 405.5 206.2 C407.3 207.9 409.2 209.4 411.5 210.4 C413.8 211.3 416.8 211.3 419.3 212.2 C421.9 213.0 424.4 214.4 427.0 215.4 C429.6 216.3 432.6 216.3 434.8 217.8 C437.1 219.2 438.4 221.8 440.3 223.8 C442.2 225.9 445.0 227.7 446.0 230.1 C447.0 232.5 445.5 235.7 446.1 238.4 C446.8 241.0 449.3 243.2 449.9 245.9 C450.5 248.5 449.8 251.5 449.7 254.1 C449.6 256.7 449.6 258.9 449.3 261.3 C449.1 263.8 448.7 266.2 448.2 268.6 C447.8 271.1 445.8 273.6 446.4 275.8 C447.0 278.0 450.0 279.7 451.7 281.9 C453.3 284.1 455.6 286.4 456.4 289.0 C457.2 291.6 456.9 294.6 456.7 297.4 C456.4 300.3 454.9 303.2 454.9 306.0 C454.9 308.7 455.9 311.3 456.6 313.9 C457.3 316.5 457.4 319.4 459.1 321.7 C460.7 324.0 464.0 325.8 466.7 327.7 C469.3 329.6 473.0 330.8 474.9 333.0 C476.9 335.3 477.4 338.3 478.3 341.0 C479.3 343.6 479.9 346.2 480.6 348.9 C481.3 351.6 480.9 354.4 482.3 357.1 C483.6 359.7 486.5 362.3 488.6 364.9 C490.7 367.5 493.4 370.2 494.6 372.9 C495.7 375.5 495.1 378.3 495.5 380.9 C495.9 383.5 496.6 386.1 497.1 388.7 C497.6 391.3 497.8 393.6 498.6 396.6 C499.3 399.5 500.2 403.3 501.4 406.6 C502.6 409.8 505.3 413.4 505.8 416.1 C506.2 418.8 504.9 420.7 504.1 422.9 C503.2 425.1 501.7 427.1 500.7 429.3 C499.7 431.4 498.5 433.2 498.3 436.0 C498.0 438.8 498.6 442.7 499.2 446.0 C499.8 449.3 500.2 453.2 501.7 455.8 C503.2 458.3 506.4 459.2 508.4 461.3 C510.4 463.3 512.7 466.9 513.6 468.0" fill="none" stroke="#9ad6f0" stroke-width="1.3" stroke-linecap="round" stroke-linejoin="round" />
<path d="M504.0 170.0 C504.3 171.4 505.4 175.6 505.7 178.4 C505.9 181.3 505.5 184.1 505.5 187.0 C505.5 189.8 505.0 192.8 505.7 195.5 C506.3 198.2 508.6 200.4 509.5 203.0 C510.5 205.6 510.5 208.5 511.4 211.2 C512.2 213.8 514.0 216.2 514.6 218.8 C515.1 221.4 514.4 224.3 514.6 227.0 C514.7 229.7 514.9 232.3 515.3 234.9 C515.7 237.6 516.4 240.2 516.8 242.8 C517.2 245.4 517.3 247.9 517.5 250.8 C517.7 253.6 518.0 256.8 517.8 259.8 C517.6 262.9 516.5 265.8 516.2 268.9 C515.8 271.9 515.8 275.3 515.9 278.0 C516.0 280.7 516.4 282.7 516.8 285.0 C517.2 287.4 517.9 289.6 518.1 292.0 C518.3 294.3 517.9 296.8 518.1 299.1 C518.3 301.5 519.3 303.6 519.4 306.1 C519.5 308.5 519.2 311.3 518.7 313.9 C518.3 316.5 517.3 319.0 516.9 321.7 C516.6 324.3 517.3 326.8 516.6 329.7 C515.8 332.6 513.6 335.9 512.5 339.1 C511.4 342.4 511.4 346.1 509.8 348.9 C508.3 351.8 505.1 353.6 503.1 356.2 C501.1 358.9 499.4 361.9 498.0 364.8 C496.6 367.6 495.2 371.7 494.7 373.1" fill="none" stroke="#9ad6f0" stroke-width="1.3" stroke-linecap="round" stroke-linejoin="round" />
<path d="M421.4 357.0 C421.1 358.3 420.4 362.4 419.7 365.1 C419.0 367.7 417.6 370.2 417.0 372.9 C416.4 375.6 416.4 378.6 416.1 381.1 C415.8 383.7 415.1 385.9 415.0 388.3 C414.8 390.7 415.2 393.1 415.1 395.6 C415.1 398.0 414.9 400.4 414.6 402.8 C414.4 405.2 414.0 407.4 413.6 410.0 C413.1 412.7 411.9 415.7 411.8 418.6 C411.7 421.5 413.0 424.5 413.0 427.4 C413.0 430.3 411.3 433.0 411.8 436.0 C412.3 439.0 414.7 442.2 416.0 445.4 C417.3 448.6 418.1 452.6 419.6 455.2 C421.0 457.8 423.3 459.0 424.6 461.1 C425.9 463.3 426.4 466.0 427.4 468.3 C428.5 470.6 430.4 473.9 430.9 475.0" fill="none" stroke="#9ad6f0" stroke-width="1.1" stroke-linecap="round" stroke-linejoin="round" />
<path d="M291.0 180.4 C290.9 181.7 290.4 185.5 290.5 188.0 C290.6 190.5 291.9 193.1 291.6 195.5 C291.2 198.0 289.2 200.2 288.4 202.8 C287.6 205.3 286.9 208.3 286.9 210.8 C286.8 213.3 287.6 215.4 288.0 217.8 C288.3 220.1 289.0 222.5 289.2 224.8 C289.5 227.2 289.7 229.5 289.5 232.1 C289.3 234.7 288.0 237.7 287.9 240.6 C287.9 243.5 289.1 246.6 289.2 249.5 C289.2 252.4 288.6 255.3 288.2 258.2 C287.8 261.1 287.8 264.1 286.8 266.8 C285.9 269.6 284.2 272.2 282.7 274.7 C281.2 277.2 279.4 279.5 277.8 281.9 C276.2 284.4 274.6 286.8 273.2 289.3 C271.8 291.9 269.9 294.4 269.3 297.2 C268.6 299.9 269.6 303.0 269.3 305.8 C268.9 308.7 267.7 311.5 267.2 314.4 C266.7 317.2 266.7 320.2 266.3 323.1 C266.0 325.9 265.6 329.2 264.9 331.7 C264.2 334.2 262.7 336.0 262.1 338.3 C261.4 340.5 261.3 343.0 260.9 345.3 C260.5 347.6 260.1 350.0 259.6 352.3 C259.0 354.6 258.1 356.8 257.5 359.1 C256.9 361.3 256.0 363.6 255.8 365.9 C255.6 368.3 256.8 370.8 256.4 373.1 C256.0 375.5 253.9 377.6 253.4 379.9 C252.8 382.2 253.1 384.6 252.9 386.9 C252.6 389.3 252.0 391.5 251.8 393.9 C251.6 396.2 251.8 398.3 251.6 401.0 C251.4 403.6 251.2 406.8 250.8 409.7 C250.4 412.6 249.8 415.5 249.3 418.4 C248.9 421.3 248.3 424.1 248.1 427.1 C248.0 430.0 248.0 433.1 248.5 436.0 C248.9 439.0 250.2 443.4 250.6 444.9" fill="none" stroke="#9ad6f0" stroke-width="1.1" stroke-linecap="round" stroke-linejoin="round" />
<path d="M341.9 275.7 C341.3 276.9 339.9 280.6 338.5 282.8 C337.1 285.0 334.5 286.5 333.5 288.9 C332.5 291.3 333.0 294.3 332.5 297.0 C331.9 299.7 330.8 302.4 330.2 305.0 C329.6 307.7 329.5 310.3 328.9 312.8 C328.2 315.4 326.2 317.8 326.1 320.2 C326.1 322.6 327.7 324.8 328.5 327.3 C329.3 329.7 330.1 332.2 330.7 334.7 C331.4 337.2 331.6 339.9 332.2 342.4 C332.9 344.9 334.5 347.2 334.6 349.8 C334.7 352.5 333.2 355.6 333.0 358.4 C332.9 361.2 333.4 364.0 333.7 366.8 C334.0 369.6 334.8 372.4 334.9 375.2 C335.0 378.0 334.5 381.0 334.3 383.6 C334.1 386.2 333.9 388.5 333.7 390.9 C333.5 393.3 333.1 395.7 333.0 398.1 C332.9 400.5 333.4 403.0 333.0 405.4 C332.5 407.8 331.0 410.1 330.4 412.5 C329.8 414.8 329.5 417.2 329.4 419.6 C329.3 422.1 330.1 424.4 330.0 427.0 C330.0 429.6 329.2 432.5 329.0 435.3 C328.9 438.0 329.2 440.9 329.1 443.6 C328.9 446.4 328.5 449.1 328.0 451.9 C327.5 454.6 326.6 457.3 326.2 460.0 C325.8 462.7 326.3 465.4 325.8 468.1 C325.4 470.7 323.8 473.2 323.5 475.9 C323.3 478.6 324.4 481.4 324.5 484.1 C324.6 486.8 324.5 489.5 324.0 492.1 C323.5 494.8 321.9 498.6 321.4 499.9" fill="none" stroke="#9ad6f0" stroke-width="1.1" stroke-linecap="round" stroke-linejoin="round" />
<path d="M56.3 523.8 C57.4 523.2 60.9 521.3 63.2 520.0 C65.4 518.6 67.3 516.5 69.8 515.6 C72.3 514.7 75.5 515.1 78.3 514.6 C81.0 514.1 83.6 514.0 86.4 512.4 C89.2 510.8 92.1 506.7 95.0 505.0 C98.0 503.4 101.3 504.0 104.1 502.6 C106.9 501.2 109.2 498.8 111.6 496.7 C113.9 494.7 115.1 492.2 118.2 490.2 C121.2 488.2 126.9 486.7 129.7 484.7 C132.4 482.7 133.0 480.4 134.6 478.3 C136.3 476.1 137.6 473.5 139.7 471.7 C141.8 470.0 143.8 469.0 147.2 467.9 C150.6 466.8 156.7 465.9 160.0 465.0 C163.3 464.2 164.7 463.7 166.8 462.7 C169.0 461.6 169.9 460.6 172.9 458.8 C175.9 457.0 181.2 453.8 184.8 451.7 C188.5 449.6 192.1 447.9 194.9 446.3 C197.8 444.8 199.7 444.0 201.9 442.5 C204.1 441.0 207.0 438.2 208.0 437.4" fill="none" stroke="#9ad6f0" stroke-width="1.1" stroke-linecap="round" stroke-linejoin="round" />
<path d="M0.0 346.5 C0.3 347.8 1.0 351.6 1.7 354.0 C2.5 356.4 3.9 358.7 4.6 361.1 C5.3 363.6 5.3 366.2 6.0 368.6 C6.7 371.0 8.3 373.3 9.0 375.8 C9.6 378.2 9.9 380.8 9.9 383.4 C9.8 386.1 9.0 388.9 8.6 391.7 C8.3 394.4 8.3 397.3 7.8 400.0 C7.3 402.8 5.4 405.7 5.6 408.1 C5.8 410.5 7.7 412.2 8.8 414.3 C9.9 416.5 11.1 418.7 12.1 420.9 C13.1 423.2 12.8 426.0 14.6 427.9 C16.4 429.8 20.0 431.3 22.9 432.5 C25.9 433.7 29.1 434.1 32.0 434.9 C34.9 435.8 37.6 436.9 40.5 437.4 C43.3 438.0 46.7 437.3 49.2 438.2 C51.7 439.1 53.0 441.5 55.2 442.7 C57.5 444.0 60.3 444.4 62.6 445.6 C64.9 446.7 67.2 447.6 69.2 449.7 C71.2 451.8 72.9 455.3 74.5 458.1 C76.2 461.0 78.4 463.2 79.1 466.8 C79.9 470.4 79.8 476.7 79.2 480.0 C78.6 483.3 76.8 484.4 75.6 486.5 C74.4 488.7 73.0 490.7 72.0 492.9 C71.0 495.1 70.8 497.4 69.6 499.8 C68.4 502.3 66.7 505.0 65.0 507.5 C63.4 510.0 61.4 512.2 59.8 514.9 C58.3 517.6 56.6 522.2 55.9 523.6" fill="none" stroke="#9ad6f0" stroke-width="1.0" stroke-linecap="round" stroke-linejoin="round" />
<path d="M103.4 408.0 C104.2 409.2 106.9 412.5 108.1 415.0 C109.3 417.5 109.7 420.4 110.6 423.0 C111.5 425.6 112.3 428.3 113.5 430.7 C114.8 433.2 116.6 435.5 117.9 437.8 C119.1 440.0 119.7 442.2 120.9 444.4 C122.0 446.5 123.5 448.4 124.8 450.5 C126.0 452.6 126.2 454.8 128.4 456.8 C130.5 458.8 135.2 462.2 137.8 462.3 C140.5 462.5 142.0 458.9 144.3 457.6 C146.6 456.4 149.2 455.9 151.5 454.7 C153.7 453.5 155.7 452.0 157.9 450.5 C160.2 449.1 162.5 447.4 164.9 446.1 C167.3 444.7 169.9 442.5 172.3 442.5 C174.8 442.5 176.9 445.3 179.3 446.2 C181.8 447.0 184.6 448.3 186.9 447.8 C189.2 447.3 190.9 444.4 193.1 443.0 C195.2 441.6 198.6 440.2 199.8 439.6" fill="none" stroke="#9ad6f0" stroke-width="1.0" stroke-linecap="round" stroke-linejoin="round" />
<path d="M123.0 337.9 C124.2 337.6 127.9 336.5 130.4 336.3 C132.9 336.2 135.2 335.4 138.0 337.1 C140.9 338.9 144.9 344.1 147.5 346.8 C150.1 349.5 151.8 350.9 153.5 353.4 C155.1 355.9 154.5 359.1 157.2 361.5 C160.0 364.0 167.6 366.9 169.7 368.0" fill="none" stroke="#62c3ea" stroke-width="1.1" stroke-linecap="round" stroke-linejoin="round" />
<path d="M160.0 307.0 C162.0 306.5 167.9 305.4 172.0 304.2 C176.2 303.0 182.5 300.3 184.6 299.5" fill="none" stroke="#62c3ea" stroke-width="1.1" stroke-linecap="round" stroke-linejoin="round" />
<path d="M225.0 771.0 C225.4 769.7 226.5 765.7 227.1 763.0 C227.7 760.3 226.9 756.7 228.5 754.9 C230.1 753.1 234.0 752.6 236.8 752.3 C239.5 751.9 242.3 752.1 245.1 752.6 C248.0 753.2 250.9 754.6 253.9 755.6 C256.8 756.5 260.1 758.7 263.0 758.4 C265.9 758.2 268.7 755.8 271.2 754.0 C273.6 752.2 275.9 749.7 278.0 747.7 C280.0 745.8 281.7 744.3 283.3 742.4 C284.8 740.4 287.8 738.1 287.3 736.1 C286.9 734.0 282.6 732.3 280.5 730.3 C278.4 728.3 275.7 725.1 274.8 724.0" fill="none" stroke="#9ad6f0" stroke-width="1.1" stroke-linecap="round" stroke-linejoin="round" />
<path d="M260.0 705.7 C261.3 706.1 265.2 707.3 267.7 708.2 C270.2 709.1 271.9 711.3 275.1 711.4 C278.3 711.5 285.0 709.2 287.0 708.8" fill="none" stroke="#9ad6f0" stroke-width="1.1" stroke-linecap="round" stroke-linejoin="round" />
<path d="M333.8 671.0 C333.9 672.4 334.4 676.5 334.4 679.3 C334.4 682.1 334.4 684.4 333.9 687.6 C333.4 690.8 333.5 696.2 331.2 698.3 C328.9 700.5 322.6 698.7 320.1 700.7 C317.5 702.7 317.0 707.2 315.9 710.3 C314.8 713.4 314.4 716.3 313.6 719.3 C312.8 722.3 312.6 724.8 311.1 728.3 C309.6 731.7 307.0 738.5 304.7 740.1 C302.5 741.6 298.7 739.1 297.6 737.4 C296.4 735.7 298.2 732.2 297.9 729.6 C297.7 727.1 297.2 724.9 296.1 722.2 C295.1 719.5 292.4 714.7 291.6 713.2" fill="none" stroke="#9ad6f0" stroke-width="1.1" stroke-linecap="round" stroke-linejoin="round" />
<path d="M333.8 671.0 C332.5 672.5 328.7 677.7 326.2 680.1 C323.6 682.4 321.2 683.7 318.5 685.0 C315.7 686.3 312.2 685.9 309.7 687.7 C307.3 689.4 304.6 693.0 303.9 695.5 C303.3 697.9 305.5 701.4 305.8 702.6" fill="none" stroke="#9ad6f0" stroke-width="1.1" stroke-linecap="round" stroke-linejoin="round" />
<path d="M335.3 688.4 C336.7 688.6 342.1 689.3 343.5 689.5" fill="none" stroke="#9ad6f0" stroke-width="1.1" stroke-linecap="round" stroke-linejoin="round" />
<polygon points="297.6,706.0 300.0,704.5 302.0,708.0 305.2,707.0 304.0,711.0 305.0,714.5 301.0,712.5 298.5,713.0" fill="#1bb3e8"/>
<circle cx="291.600" cy="705.700" r="1.400" fill="#1bb3e8"/><path d="M379 714 L382.700 717.700 M362.300 653 L365.400 651.500 M300 724 L303 728" stroke="#1bb3e8" stroke-width="1.700" fill="none"/>
<path d="M352.6 707.9 C357.2 708.0 372.0 707.8 380.4 708.7 C388.8 709.6 396.4 711.5 403.0 713.2 C409.6 715.0 417.2 718.2 420.0 719.2" fill="none" stroke="#35b6e6" stroke-width="2.0" stroke-linecap="round" stroke-linejoin="round" />
<path d="M420.0 719.2 C421.2 719.6 424.8 720.4 427.0 721.4 C429.2 722.3 431.2 723.9 433.4 725.0 C435.5 726.2 437.5 727.3 439.9 728.3 C442.3 729.2 445.2 730.0 448.0 730.8 C450.7 731.6 453.5 732.0 456.1 732.9 C458.8 733.8 462.7 735.5 464.0 736.0" fill="none" stroke="#9ad6f0" stroke-width="1.2" stroke-linecap="round" stroke-linejoin="round" />
<path d="M214.0 634.5 C214.8 635.4 217.4 638.2 219.0 640.0 C220.6 641.8 222.8 644.2 223.6 645.0" fill="none" stroke="#35b6e6" stroke-width="2.0" stroke-linecap="round" stroke-linejoin="round" />
<path d="M177.0 613.0 C178.0 613.8 182.0 617.2 183.0 618.0" fill="none" stroke="#35b6e6" stroke-width="1.6" stroke-linecap="round" stroke-linejoin="round" />
<path d="M75.0 585.0 C76.7 586.2 81.6 591.2 85.0 592.1 C88.3 593.0 92.5 589.1 95.1 590.4 C97.7 591.6 99.6 598.2 100.5 599.8" fill="none" stroke="#9ad6f0" stroke-width="1.0" stroke-linecap="round" stroke-linejoin="round" />
<path d="M390.0 482.5 C391.4 482.4 395.6 482.2 398.3 481.8 C401.1 481.4 403.8 480.5 406.6 480.2 C409.4 479.8 412.4 480.2 415.0 479.7 C417.5 479.2 419.8 478.1 422.0 477.0 C424.2 475.8 426.2 474.0 428.3 472.7 C430.5 471.4 433.9 469.7 435.0 469.1" fill="none" stroke="#9ad6f0" stroke-width="1.2" stroke-linecap="round" stroke-linejoin="round" />
<path d="M415.0 440.0 C415.7 441.2 417.9 444.7 419.5 447.1 C421.0 449.4 422.4 451.8 424.1 454.0 C425.9 456.1 428.4 457.3 430.1 460.0 C431.7 462.6 433.2 468.4 433.9 470.1" fill="none" stroke="#9ad6f0" stroke-width="1.2" stroke-linecap="round" stroke-linejoin="round" />
<path d="M597.4 639.0 C598.2 638.2 600.6 634.0 602.4 634.0 C604.3 634.0 607.3 636.1 608.5 639.0 C609.7 641.9 608.0 649.0 609.5 651.5 C610.9 654.0 614.1 652.4 617.0 653.9 C619.9 655.5 624.1 660.9 627.0 661.0 C629.9 661.2 631.8 656.9 634.4 655.0 C636.9 653.0 640.1 651.4 642.2 649.4 C644.2 647.5 645.1 645.2 646.5 643.1 C648.0 641.1 650.1 638.0 650.8 637.0" fill="none" stroke="#86cfee" stroke-width="1.1" stroke-linecap="round" stroke-linejoin="round" />
<path d="M597.4 639.0 C597.1 641.1 594.2 648.6 595.4 651.4 C596.7 654.3 602.4 654.1 605.0 656.1 C607.5 658.2 610.2 661.0 610.9 663.8 C611.6 666.7 610.6 670.3 609.1 673.5 C607.6 676.8 604.8 681.1 602.0 683.2 C599.3 685.4 594.2 685.9 592.6 686.5" fill="none" stroke="#6cc8ec" stroke-width="1.2" stroke-linecap="round" stroke-linejoin="round" />
<path d="M529.7 693.4 C531.2 694.6 535.1 698.3 538.6 700.3 C542.1 702.4 546.8 705.7 550.6 705.6 C554.4 705.6 559.5 703.1 561.5 700.2 C563.5 697.3 560.8 690.8 562.7 688.4 C564.5 685.9 570.4 684.6 572.7 685.5 C574.9 686.3 575.7 692.2 576.3 693.5" fill="none" stroke="#6cc8ec" stroke-width="1.2" stroke-linecap="round" stroke-linejoin="round" />
<path d="M526.0 695.8 C525.3 697.0 522.3 700.1 522.0 703.0 C521.7 705.9 525.6 710.1 524.2 713.1 C522.8 716.1 517.3 718.9 513.9 720.9 C510.4 722.9 506.2 722.4 503.7 725.1 C501.2 727.9 499.5 735.5 498.7 737.6" fill="none" stroke="#9ad6f0" stroke-width="1.2" stroke-linecap="round" stroke-linejoin="round" />
<path d="M425.0 719.0 C426.7 720.4 432.1 725.5 435.1 727.6 C438.1 729.6 440.3 730.3 443.1 731.3 C445.9 732.3 448.7 732.0 451.8 733.4 C455.0 734.8 460.7 736.9 462.1 739.7 C463.5 742.5 460.4 748.2 460.1 749.9" fill="none" stroke="#86cfee" stroke-width="1.2" stroke-linecap="round" stroke-linejoin="round" />
<path d="M-3.0 200.0 C-1.2 200.8 4.5 202.5 7.5 205.0 C10.5 207.5 12.8 210.0 15.0 215.0 C17.2 220.0 19.3 227.5 21.0 235.0 C22.7 242.5 23.7 252.9 25.0 260.0 C26.3 267.1 26.9 273.3 29.0 277.5 C31.1 281.7 34.4 283.2 37.5 285.0 C40.6 286.8 43.8 288.0 47.5 288.0 C51.2 288.0 55.8 287.0 60.0 285.0 C64.2 283.0 68.3 280.2 72.5 276.0 C76.7 271.8 80.8 265.6 85.0 260.0 C89.2 254.4 93.8 248.3 97.5 242.5 C101.2 236.7 104.4 230.4 107.5 225.0 C110.6 219.6 113.1 213.5 116.0 210.0 C118.9 206.5 121.8 204.8 125.0 204.0 C128.2 203.2 133.3 204.8 135.0 205.0" fill="none" stroke="#1bb3e8" stroke-width="5.2" stroke-linecap="round" stroke-linejoin="round" />
<path d="M125.0 204.0 C126.7 204.2 131.2 203.8 135.0 205.0 C138.8 206.2 143.3 208.5 147.5 211.0 C151.7 213.5 155.8 216.2 160.0 220.0 C164.2 223.8 168.8 229.0 172.5 234.0 C176.2 239.0 179.4 244.4 182.5 250.0 C185.6 255.6 188.5 261.7 191.0 267.5 C193.5 273.3 196.0 279.2 197.5 285.0 C199.0 290.8 199.8 296.7 200.0 302.5 C200.2 308.3 200.0 314.6 199.0 320.0 C198.0 325.4 195.7 331.5 194.0 335.0 C192.3 338.5 189.8 340.0 189.0 341.0" fill="none" stroke="#1bb3e8" stroke-width="6.6" stroke-linecap="round" stroke-linejoin="round" />
<path d="M194.0 335.0 C193.0 336.0 189.9 338.9 188.0 341.0 C186.1 343.1 184.9 344.6 182.8 347.7 C180.7 350.8 177.3 355.6 175.5 359.5 C173.7 363.4 172.6 368.2 171.8 371.4 C171.1 374.6 171.1 377.3 171.0 378.5" fill="none" stroke="#1bb3e8" stroke-width="7.2" stroke-linecap="round" stroke-linejoin="round" />
<path d="M171.0 380.0 C170.9 380.8 170.1 382.2 170.3 384.7 C170.6 387.2 171.2 391.3 172.5 395.0 C173.8 398.7 175.7 402.9 178.4 406.8 C181.1 410.7 184.8 414.7 188.7 418.6 C192.6 422.5 198.3 426.9 202.0 430.4 C205.7 433.8 207.5 436.4 210.9 439.3 C214.3 442.2 218.7 445.5 222.7 448.0 C226.7 450.5 231.3 452.7 235.0 454.5 C238.7 456.3 240.8 457.2 245.0 459.0 C249.2 460.8 255.4 463.2 260.0 465.0 C264.6 466.8 270.4 469.2 272.5 470.0" fill="none" stroke="#1bb3e8" stroke-width="4.2" stroke-linecap="round" stroke-linejoin="round" />
<path d="M260.0 465.0 C262.1 465.8 269.1 468.7 272.5 470.0 C275.9 471.3 278.5 470.3 280.5 473.0 C282.5 475.7 282.8 482.2 284.5 486.4 C286.2 490.6 287.9 494.9 291.0 498.2 C294.1 501.5 299.0 503.6 303.0 506.0 C307.0 508.4 311.1 510.9 314.8 512.7 C318.5 514.5 321.8 516.3 325.3 516.7 C328.8 517.1 332.8 516.0 335.9 515.3 C339.0 514.6 340.7 514.0 343.8 512.7 C346.9 511.4 352.6 508.3 354.3 507.4" fill="none" stroke="#1bb3e8" stroke-width="6.2" stroke-linecap="round" stroke-linejoin="round" />
<path d="M167 379.500 L175 379.500" stroke="#eaf6fb" stroke-width="1.200"/>
<polygon points="338.5,512.7 357.5,505.0 349.0,525.2 335.9,520.6" fill="#1bb3e8"/>
<path d="M356.0 506.0 C357.5 505.8 361.8 505.2 365.0 505.0 C368.2 504.8 371.5 504.6 375.4 504.8 C379.3 505.0 385.5 504.2 388.6 506.0 C391.7 507.8 391.6 512.9 393.8 515.3 C396.0 517.7 398.6 519.7 401.7 520.6 C404.8 521.5 408.2 520.8 412.5 520.5 C416.8 520.2 422.9 519.9 427.5 519.0 C432.1 518.1 435.9 516.6 440.0 515.2 C444.1 513.8 448.7 512.7 452.0 510.7 C455.3 508.7 457.6 505.7 459.6 503.2 C461.6 500.7 462.3 498.2 464.0 495.6 C465.7 493.0 467.0 490.4 470.0 487.4 C473.0 484.4 477.7 480.4 482.0 477.6 C486.3 474.8 491.4 472.2 495.7 470.8 C500.0 469.4 502.9 469.7 507.7 469.3 C512.5 468.9 520.0 468.4 524.3 468.5 C528.6 468.6 530.8 469.0 533.3 470.0 C535.8 471.0 538.3 472.3 539.3 474.6 C540.3 476.9 538.3 481.5 539.3 483.6 C540.3 485.7 541.9 486.5 545.4 487.4 C548.9 488.3 555.4 488.5 560.4 488.9 C565.4 489.3 572.1 488.2 575.5 489.6 C578.9 491.0 579.8 493.7 580.7 497.0 C581.6 500.3 581.6 505.4 580.7 509.2 C579.8 513.0 577.6 516.4 575.5 519.7 C573.4 523.0 570.5 526.0 568.0 528.8 C565.5 531.6 564.2 534.0 560.4 536.3 C556.6 538.5 550.4 540.8 545.4 542.3 C540.4 543.8 534.8 543.8 530.3 545.3 C525.8 546.8 522.1 548.8 518.3 551.3 C514.5 553.8 510.7 556.9 507.7 560.4 C504.7 563.9 501.9 568.8 500.2 572.4 C498.5 576.0 497.4 578.6 497.5 582.0 C497.6 585.4 498.9 588.2 501.0 592.5 C503.1 596.8 506.4 603.1 510.0 607.5 C513.6 611.9 517.5 615.7 522.5 619.0 C527.5 622.3 533.8 625.5 540.0 627.5 C546.2 629.5 553.3 631.0 560.0 631.0 C566.7 631.0 573.8 629.3 580.0 627.5 C586.2 625.7 591.7 622.5 597.5 620.0 C603.3 617.5 610.0 615.0 615.0 612.5 C620.0 610.0 623.8 608.8 627.5 605.0 C631.2 601.2 635.4 594.8 637.5 590.0 C639.6 585.2 637.9 578.9 640.0 576.0 C642.1 573.1 647.0 573.3 650.0 572.5 C653.0 571.7 656.7 571.2 658.0 571.0" fill="none" stroke="#1bb3e8" stroke-width="1.7" stroke-linecap="round" stroke-linejoin="round" />
<polygon points="470.9,499.4 491.2,485.9 493.4,487.4 488.2,498.6 474.6,500.9" fill="#1bb3e8"/>
<polygon points="480.6,484.3 495.7,476.1 498.0,477.6 483.6,487.4" fill="#1bb3e8"/>
<polygon points="466.3,492.6 485.2,476.1 495.7,471.6 496.4,473.1 486.7,477.6 468.6,494.1" fill="#1bb3e8"/>
<polygon points="500.2,474.6 521.3,473.1 525.0,480.6 521.3,485.1 510.7,486.6 501.0,483.6" fill="#1bb3e8"/>
<polygon points="496.0,470.0 524.0,467.6 524.0,470.0 496.0,472.6" fill="#1bb3e8"/>
<polygon points="526.5,512.2 545.4,495.6 547.6,497.1 530.3,514.5" fill="#1bb3e8"/>
<polygon points="522.0,514.5 531.8,502.4 534.1,503.2 524.3,516.7" fill="#1bb3e8"/>
<polygon points="519.8,521.2 523.5,512.2 525.0,513.0 522.0,522.7" fill="#1bb3e8"/>
<polygon points="546.0,493.4 549.9,491.9 549.0,495.0 546.9,495.6" fill="#1bb3e8"/>
<polygon points="545.4,506.2 558.9,506.9 559.7,510.7 546.9,511.4" fill="#1bb3e8"/>
<polygon points="520.5,537.8 529.6,536.3 531.1,541.5 522.0,544.6" fill="#1bb3e8"/>
<polygon points="465.6,505.4 470.9,503.9 471.6,505.4 466.3,507.7" fill="#1bb3e8"/>
<polygon points="484.5,516.0 488.5,516.5 489.0,519.0 485.5,519.0" fill="#1bb3e8"/>
<polygon points="490.0,536.5 493.0,534.5 494.0,536.0 491.0,538.0" fill="#1bb3e8"/>
<polygon points="478.4,541.5 484.4,540.0 485.2,543.8 479.9,546.1" fill="#1bb3e8"/>
<polygon points="475.4,548.3 479.9,546.1 480.6,548.3 476.9,551.3" fill="#1bb3e8"/>
<polygon points="480.6,557.3 484.4,555.3 485.0,556.5 481.2,558.5" fill="#1bb3e8"/>
<polygon points="452.8,558.9 457.3,552.8 458.1,554.3 454.3,560.4" fill="#1bb3e8"/>
<polygon points="424.0,512.0 428.0,511.0 430.0,514.0 425.0,514.5" fill="#1bb3e8"/>
<polygon points="512.4,583.7 523.0,587.5 520.0,598.0 514.9,599.7" fill="#1bb3e8"/>
<polygon points="524.0,589.0 527.0,582.5 540.7,588.6 538.0,596.0 530.0,592.5" fill="#1bb3e8"/>
<polygon points="521.5,599.5 529.0,594.0 537.0,597.5 533.4,609.6" fill="#1bb3e8"/>
<polygon points="636.9,594.8 656.0,589.9 656.0,614.5 634.4,609.6" fill="#1bb3e8"/>
<polygon points="624.5,596.0 630.7,593.6 629.5,603.4 625.8,602.2" fill="#1bb3e8"/>
<polygon points="579.0,698.3 587.6,699.5 582.6,707.0 576.5,705.7" fill="#1bb3e8"/>
<polygon points="606.0,247.0 610.0,249.0 611.0,252.0 607.0,250.5" fill="#1bb3e8"/>
<polygon points="510.0,420.0 518.0,420.5 517.5,423.5 511.0,423.0" fill="#1bb3e8"/>
<polygon points="615.7,251.5 622.5,253.0 622.5,255.5 617.0,255.0" fill="#1bb3e8"/>
<path d="M452 542.3 L461.8 552.8" stroke="#1bb3e8" stroke-width="1.1" fill="none"/><path d="M478.4 510.7 L486.7 518.2" stroke="#1bb3e8" stroke-width="1.9" fill="none"/>
<circle cx="609.7" cy="602.2" r="1.6" fill="#1bb3e8"/>
<circle cx="588.8" cy="709.4" r="1.2" fill="#1bb3e8"/>
<circle cx="576" cy="571" r="1.6" fill="#1bb3e8"/>
<circle cx="586" cy="171.3" r="1.5" fill="#1bb3e8"/>
<circle cx="600" cy="183" r="1.5" fill="#1bb3e8"/>
<circle cx="609.7" cy="188" r="1.5" fill="#1bb3e8"/>
<circle cx="572.3" cy="192" r="1.5" fill="#1bb3e8"/>
<circle cx="633.4" cy="195" r="1.4" fill="#1bb3e8"/>
<circle cx="650" cy="147.6" r="1.6" fill="#1bb3e8"/>
<circle cx="631.4" cy="126" r="1.4" fill="#1bb3e8"/>
<circle cx="588" cy="225.5" r="1.2" fill="#1bb3e8"/>
<circle cx="233" cy="310" r="1.6" fill="#1bb3e8"/>
<circle cx="426" cy="605" r="1.2" fill="#1bb3e8"/>
<circle cx="364" cy="640" r="1.1" fill="#1bb3e8"/>
<circle cx="343" cy="600" r="1.1" fill="#1bb3e8"/>
<polygon points="624.7,301.5 627.7,302.5 634.6,319.3 642.5,319.3 650.3,303.5 653.3,295.6 656.0,295.6 656.0,392.0 646.4,394.0 642.5,380.0 636.6,364.6 634.6,354.7 636.6,339.0 631.6,331.0 626.7,329.0 621.8,339.0 624.7,327.0 620.8,322.0 615.9,321.0 618.8,317.3 626.7,316.3" fill="#1bb3e8"/>
<polygon points="596.2,349.8 601.0,347.8 607.0,348.8 612.9,352.8 617.8,362.6 624.7,368.5 628.7,378.4 632.6,386.3 646.4,394.0 656.0,392.0 656.0,408.0 644.4,415.8 632.6,411.9 626.7,406.0 616.8,402.0 618.8,392.0 609.0,386.3 614.9,380.3 611.9,370.5 605.0,366.6 610.0,360.6 607.0,354.7 599.0,351.8" fill="#1bb3e8"/>
<g font-family="Liberation Sans,sans-serif">
<text x="225.6" y="127.7" font-size="7.5" fill="#bababa" text-anchor="start" textLength="64.8" lengthAdjust="spacingAndGlyphs" transform="rotate(47.3 225.6 127.7)">Spicewood Springs Rd</text>
<text x="219.5" y="186.3" font-size="7.5" fill="#bababa" text-anchor="start" textLength="26.3" lengthAdjust="spacingAndGlyphs" transform="rotate(-56.6 219.5 186.3)">Mesa Dr</text>
<text x="289.0" y="179.0" font-size="7.5" fill="#bababa" text-anchor="start" textLength="41.1" lengthAdjust="spacingAndGlyphs" transform="rotate(26.4 289.0 179.0)">W Anderson Ln</text>
<text x="192.6" y="250.0" font-size="7.5" fill="#93bdd4" text-anchor="start" textLength="49.1" lengthAdjust="spacingAndGlyphs" transform="rotate(75.6 192.6 250.0)">Lake Austin</text>
<text x="146.0" y="256.0" font-size="7.5" fill="#bababa" text-anchor="start" textLength="39.0" lengthAdjust="spacingAndGlyphs" transform="rotate(32.2 146.0 256.0)">Westlake Dr</text>
<text x="187.5" y="375.0" font-size="7.5" fill="#bababa" text-anchor="start" textLength="37.1" lengthAdjust="spacingAndGlyphs" transform="rotate(32.6 187.5 375.0)">Enfield Rd</text>
<text x="80.0" y="381.0" font-size="7.5" fill="#bababa" text-anchor="start" textLength="44.6" lengthAdjust="spacingAndGlyphs" transform="rotate(44.1 80.0 381.0)">Bee Caves Rd</text>
<text x="456.0" y="204.8" font-size="7.5" fill="#bababa" text-anchor="start" textLength="36.5" lengthAdjust="spacingAndGlyphs" transform="rotate(-61.3 456.0 204.8)">Dessau Rd</text>
<text x="512.0" y="257.5" font-size="7.5" fill="#bababa" text-anchor="start" textLength="43.6" lengthAdjust="spacingAndGlyphs" transform="rotate(-66.3 512.0 257.5)">Springdale Rd</text>
<text x="553.5" y="203.8" font-size="7.5" fill="#bababa" text-anchor="start" textLength="54.1" lengthAdjust="spacingAndGlyphs" transform="rotate(27.5 553.5 203.8)">Blue Goose Rd</text>
<text x="593.5" y="254.4" font-size="7.5" fill="#bababa" text-anchor="start" textLength="28.0" lengthAdjust="spacingAndGlyphs" transform="rotate(-58.9 593.5 254.4)">Giles Ln</text>
<text x="619.0" y="302.3" font-size="7.5" fill="#bababa" text-anchor="start" textLength="33.8" lengthAdjust="spacingAndGlyphs" transform="rotate(-58.4 619.0 302.3)">Decker Ln</text>
<text x="500.0" y="352.0" font-size="7.5" fill="#bababa" text-anchor="start" textLength="33.1" lengthAdjust="spacingAndGlyphs" transform="rotate(20.4 500.0 352.0)">Loyola Ln</text>
<text x="380.8" y="584.0" font-size="7.5" fill="#bababa" text-anchor="start" textLength="51.8" lengthAdjust="spacingAndGlyphs" transform="rotate(-60.4 380.8 584.0)">Montopolis Dr</text>
<text x="318.0" y="619.0" font-size="7.5" fill="#bababa" text-anchor="start" textLength="43.8" lengthAdjust="spacingAndGlyphs" transform="rotate(32.9 318.0 619.0)">Burleson Rd</text>
<text x="337.5" y="718.6" font-size="7.5" fill="#bababa" text-anchor="start" textLength="70.3" lengthAdjust="spacingAndGlyphs" transform="rotate(-33.7 337.5 718.6)">McKinney Falls Pkwy</text>
<text x="220.7" y="686.0" font-size="7.5" fill="#bababa" text-anchor="start" textLength="69.8" lengthAdjust="spacingAndGlyphs" transform="rotate(29.8 220.7 686.0)">E William Cannon Dr</text>
<text x="114.7" y="649.3" font-size="7.5" fill="#bababa" text-anchor="start" textLength="72.6" lengthAdjust="spacingAndGlyphs" transform="rotate(17.4 114.7 649.3)">W William Cannon Dr</text>
<text x="238.0" y="666.6" font-size="7.5" fill="#bababa" text-anchor="start" textLength="46.2" lengthAdjust="spacingAndGlyphs" transform="rotate(10.8 238.0 666.6)">E Stassney Ln</text>
<text x="149.3" y="612.6" font-size="7.5" fill="#bababa" text-anchor="start" textLength="49.4" lengthAdjust="spacingAndGlyphs" transform="rotate(28.8 149.3 612.6)">W Stassney Ln</text>
<text x="103.9" y="697.0" font-size="7.5" fill="#bababa" text-anchor="start" textLength="45.4" lengthAdjust="spacingAndGlyphs" transform="rotate(0.0 103.9 697.0)">W Dittmar Rd</text>
<text x="69.2" y="764.0" font-size="7.5" fill="#bababa" text-anchor="start" textLength="57.4" lengthAdjust="spacingAndGlyphs" transform="rotate(-70.1 69.2 764.0)">Manchaca Rd</text>
<text x="36.8" y="705.6" font-size="7.5" fill="#bababa" text-anchor="start" textLength="54.7" lengthAdjust="spacingAndGlyphs" transform="rotate(-56.5 36.8 705.6)">West Gate Blvd</text>
<text x="6.5" y="710.0" font-size="7.5" fill="#bababa" text-anchor="start" textLength="36.1" lengthAdjust="spacingAndGlyphs" transform="rotate(-57.3 6.5 710.0)">Brodie Ln</text>
<text x="197.0" y="619.0" font-size="7.5" fill="#bababa" text-anchor="start" textLength="27.4" lengthAdjust="spacingAndGlyphs" transform="rotate(-71.9 197.0 619.0)">S 1st St</text>
<text x="601.0" y="750.0" font-size="7.5" fill="#bababa" text-anchor="start" textLength="33.2" lengthAdjust="spacingAndGlyphs" transform="rotate(30.8 601.0 750.0)">Pearce Ln</text>
<text x="601.0" y="723.0" font-size="7.5" fill="#bababa" text-anchor="start" textLength="29.0" lengthAdjust="spacingAndGlyphs" transform="rotate(-43.6 601.0 723.0)">Ross Rd</text>
<text x="634.4" y="737.7" font-size="7.5" fill="#bababa" text-anchor="start" textLength="33.5" lengthAdjust="spacingAndGlyphs" transform="rotate(-73.0 634.4 737.7)">Kellam Rd</text>
<text x="420.0" y="352.0" font-size="7.5" fill="#bababa" text-anchor="start" textLength="26.9" lengthAdjust="spacingAndGlyphs" transform="rotate(-48.0 420.0 352.0)">Manor Rd</text>
<text x="268.0" y="585.0" font-size="7.5" fill="#bababa" text-anchor="start" textLength="33.8" lengthAdjust="spacingAndGlyphs" transform="rotate(19.0 268.0 585.0)">Ben White Blvd</text>
<text x="291.0" y="669.0" font-size="7.5" fill="#bababa" text-anchor="start" textLength="24.6" lengthAdjust="spacingAndGlyphs" transform="rotate(26.6 291.0 669.0)">Teri Rd</text>
<text x="537.0" y="547.5" font-size="7" fill="#8ac6e3" text-anchor="start" textLength="33.0" lengthAdjust="spacingAndGlyphs" transform="rotate(-27.0 537.0 547.5)">Colorado River</text>
<text x="382.4" y="129.5" font-size="7.4" fill="#4b4b4b" text-anchor="middle" font-weight="700">NORTH</text>
<text x="382.4" y="137.6" font-size="7.4" fill="#4b4b4b" text-anchor="middle" font-weight="700" textLength="54.0" lengthAdjust="spacingAndGlyphs">AUSTIN CIVIC</text>
<text x="382.4" y="146.0" font-size="7.4" fill="#4b4b4b" text-anchor="middle" font-weight="700" textLength="51.0" lengthAdjust="spacingAndGlyphs">ASSOCIATION</text>
<text x="417.6" y="161.0" font-size="7.4" fill="#4b4b4b" text-anchor="middle" font-weight="700" textLength="54.4" lengthAdjust="spacingAndGlyphs">NORTH LAMAR</text>
<text x="306.8" y="164.3" font-size="7.4" fill="#4b4b4b" text-anchor="middle" font-weight="700" textLength="52.5" lengthAdjust="spacingAndGlyphs">NORTH SHOAL</text>
<text x="306.8" y="171.9" font-size="7.4" fill="#4b4b4b" text-anchor="middle" font-weight="700" textLength="25.0" lengthAdjust="spacingAndGlyphs">CREEK</text>
<text x="219.7" y="200.3" font-size="7.4" fill="#4b4b4b" text-anchor="middle" font-weight="700" textLength="46.0" lengthAdjust="spacingAndGlyphs">NORTHWEST</text>
<text x="219.7" y="208.0" font-size="7.4" fill="#4b4b4b" text-anchor="middle" font-weight="700" textLength="22.0" lengthAdjust="spacingAndGlyphs">HILLS</text>
<text x="321.6" y="219.0" font-size="7.4" fill="#4b4b4b" text-anchor="middle" font-weight="700" textLength="44.0" lengthAdjust="spacingAndGlyphs">CRESTVIEW</text>
<text x="344.5" y="305.0" font-size="7.4" fill="#4b4b4b" text-anchor="middle" font-weight="700" textLength="48.5" lengthAdjust="spacingAndGlyphs">NORTH LOOP</text>
<text x="311.0" y="346.8" font-size="7.4" fill="#4b4b4b" text-anchor="middle" font-weight="700" textLength="40.0" lengthAdjust="spacingAndGlyphs">HYDE PARK</text>
<text x="417.4" y="330.8" font-size="7.4" fill="#4b4b4b" text-anchor="middle" font-weight="700" textLength="56.8" lengthAdjust="spacingAndGlyphs">WINDSOR PARK</text>
<text x="217.0" y="352.5" font-size="7.4" fill="#4b4b4b" text-anchor="middle" font-weight="700" textLength="46.7" lengthAdjust="spacingAndGlyphs">TARRYTOWN</text>
<text x="278.5" y="440.5" font-size="7.4" fill="#4b4b4b" text-anchor="middle" font-weight="700" textLength="45.0" lengthAdjust="spacingAndGlyphs">DOWNTOWN</text>
<text x="167.5" y="499.5" font-size="7.4" fill="#4b4b4b" text-anchor="middle" font-weight="700" textLength="53.0" lengthAdjust="spacingAndGlyphs">BARTON HILLS</text>
<text x="271.5" y="545.4" font-size="7.4" fill="#4b4b4b" text-anchor="middle" font-weight="700" textLength="25.0" lengthAdjust="spacingAndGlyphs">SOUTH</text>
<text x="272.5" y="553.0" font-size="7.4" fill="#4b4b4b" text-anchor="middle" font-weight="700" textLength="39.0" lengthAdjust="spacingAndGlyphs">CONGRESS</text>
<text x="36.7" y="551.6" font-size="7.4" fill="#4b4b4b" text-anchor="middle" font-weight="700" textLength="33.4" lengthAdjust="spacingAndGlyphs">OAK HILL</text>
<text x="141.0" y="586.7" font-size="7.4" fill="#4b4b4b" text-anchor="middle" font-weight="700" textLength="41.0" lengthAdjust="spacingAndGlyphs">WESTGATE</text>
<text x="178.0" y="550.0" font-size="7.4" fill="#4b4b4b" text-anchor="middle" font-weight="700" textLength="44.0" lengthAdjust="spacingAndGlyphs">SOUTH LAMAR</text>
<text x="327.0" y="578.5" font-size="7.4" fill="#4b4b4b" text-anchor="middle" font-weight="700" textLength="60.0" lengthAdjust="spacingAndGlyphs">EAST RIVERSIDE</text>
<text x="327.0" y="586.3" font-size="7.4" fill="#4b4b4b" text-anchor="middle" font-weight="700" textLength="34.0" lengthAdjust="spacingAndGlyphs">- OLTORF</text>
<text x="141.0" y="637.6" font-size="7.4" fill="#4b4b4b" text-anchor="middle" font-weight="700" textLength="60.0" lengthAdjust="spacingAndGlyphs">GARRISON PARK</text>
<text x="300.0" y="648.0" font-size="7.4" fill="#4b4b4b" text-anchor="middle" font-weight="700" textLength="44.0" lengthAdjust="spacingAndGlyphs">SOUTHEAST</text>
<text x="300.3" y="655.6" font-size="7.4" fill="#4b4b4b" text-anchor="middle" font-weight="700" textLength="26.7" lengthAdjust="spacingAndGlyphs">AUSTIN</text>
<text x="151.0" y="764.3" font-size="7.4" fill="#4b4b4b" text-anchor="middle" font-weight="700" textLength="46.0" lengthAdjust="spacingAndGlyphs">SOUTHPARK</text>
<text x="151.0" y="772.0" font-size="7.4" fill="#4b4b4b" text-anchor="middle" font-weight="700" textLength="38.0" lengthAdjust="spacingAndGlyphs">MEADOWS</text>
<text x="250.5" y="494.5" font-size="7.4" fill="#4b4b4b" text-anchor="middle" font-weight="700" textLength="34.0" lengthAdjust="spacingAndGlyphs">BOULDIN</text>
<text x="133.1" y="363.8" font-size="10.8" fill="#5a5a5a" text-anchor="middle" textLength="22.8" lengthAdjust="spacingAndGlyphs">West</text>
<text x="132.5" y="373.8" font-size="10.8" fill="#5a5a5a" text-anchor="middle" textLength="45.0" lengthAdjust="spacingAndGlyphs">Lake Hills</text>
<text x="37.0" y="417.5" font-size="10.5" fill="#5a5a5a" text-anchor="middle" textLength="49.1" lengthAdjust="spacingAndGlyphs">Lost Creek</text>
<text x="160.4" y="430.8" font-size="10.5" fill="#5a5a5a" text-anchor="middle" textLength="56.8" lengthAdjust="spacingAndGlyphs">Rollingwood</text>
<text x="99.3" y="574.3" font-size="10.5" fill="#5a5a5a" text-anchor="middle" textLength="62.1" lengthAdjust="spacingAndGlyphs">Sunset Valley</text>
<text x="578.7" y="303.0" font-size="10.5" fill="#5a5a5a" text-anchor="middle" textLength="30.9" lengthAdjust="spacingAndGlyphs">Daffan</text>
<text x="409.6" y="764.0" font-size="10.5" fill="#5a5a5a" text-anchor="middle" textLength="48.0" lengthAdjust="spacingAndGlyphs">Pilot Knob</text>
<text x="481.8" y="744.6" font-size="10.5" fill="#5a5a5a" text-anchor="middle" textLength="34.4" lengthAdjust="spacingAndGlyphs">Moores</text>
<text x="481.5" y="754.5" font-size="10.5" fill="#5a5a5a" text-anchor="middle" textLength="41.5" lengthAdjust="spacingAndGlyphs">Crossing</text>
<text x="255.0" y="461.0" font-size="15.5" fill="#333" text-anchor="start" textLength="53.8" lengthAdjust="spacingAndGlyphs">Austin</text>
<rect x="149.3" y="180.1" width="18" height="11" rx="3.5" fill="#fbfbfb" stroke="#c9c9c9" stroke-width="0.9"/>
<text x="158.3" y="188.2" font-size="7" fill="#9a9a9a" text-anchor="middle">360</text>
<rect x="68.6" y="405.1" width="18" height="11" rx="3.5" fill="#fbfbfb" stroke="#c9c9c9" stroke-width="0.9"/>
<text x="77.6" y="413.2" font-size="7" fill="#9a9a9a" text-anchor="middle">360</text>
<rect x="99.0" y="479.5" width="18" height="11" rx="3.5" fill="#fbfbfb" stroke="#c9c9c9" stroke-width="0.9"/>
<text x="108.0" y="487.6" font-size="7" fill="#9a9a9a" text-anchor="middle">360</text>
<rect x="245.7" y="249.3" width="12" height="11" rx="3.5" fill="#fbfbfb" stroke="#c9c9c9" stroke-width="0.9"/>
<text x="251.7" y="257.4" font-size="7" fill="#9a9a9a" text-anchor="middle">1</text>
<rect x="92.8" y="527.8" width="12" height="11" rx="3.5" fill="#fbfbfb" stroke="#c9c9c9" stroke-width="0.9"/>
<text x="98.8" y="535.9" font-size="7" fill="#9a9a9a" text-anchor="middle">1</text>
<rect x="206.5" y="424.5" width="12" height="11" rx="3.5" fill="#fbfbfb" stroke="#c9c9c9" stroke-width="0.9"/>
<text x="212.5" y="432.6" font-size="7" fill="#9a9a9a" text-anchor="middle">1</text>
<rect x="343.0" y="187.0" width="18" height="11" rx="3.5" fill="#fbfbfb" stroke="#c9c9c9" stroke-width="0.9"/>
<text x="352.0" y="195.1" font-size="7" fill="#9a9a9a" text-anchor="middle">183</text>
<rect x="471.4" y="295.9" width="18" height="11" rx="3.5" fill="#fbfbfb" stroke="#c9c9c9" stroke-width="0.9"/>
<text x="480.4" y="304.0" font-size="7" fill="#9a9a9a" text-anchor="middle">183</text>
<rect x="448.5" y="469.5" width="18" height="11" rx="3.5" fill="#fbfbfb" stroke="#c9c9c9" stroke-width="0.9"/>
<text x="457.5" y="477.6" font-size="7" fill="#9a9a9a" text-anchor="middle">183</text>
<rect x="425.5" y="635.1" width="18" height="11" rx="3.5" fill="#fbfbfb" stroke="#c9c9c9" stroke-width="0.9"/>
<text x="434.5" y="643.2" font-size="7" fill="#9a9a9a" text-anchor="middle">183</text>
<rect x="419.8" y="289.8" width="18" height="11" rx="3.5" fill="#fbfbfb" stroke="#c9c9c9" stroke-width="0.9"/>
<text x="428.8" y="297.9" font-size="7" fill="#9a9a9a" text-anchor="middle">290</text>
<rect x="585.5" y="261.5" width="18" height="11" rx="3.5" fill="#fbfbfb" stroke="#c9c9c9" stroke-width="0.9"/>
<text x="594.5" y="269.6" font-size="7" fill="#9a9a9a" text-anchor="middle">290</text>
<rect x="65.5" y="543.9" width="18" height="11" rx="3.5" fill="#fbfbfb" stroke="#c9c9c9" stroke-width="0.9"/>
<text x="74.5" y="552.0" font-size="7" fill="#9a9a9a" text-anchor="middle">290</text>
<rect x="188.2" y="568.2" width="18" height="11" rx="3.5" fill="#fbfbfb" stroke="#c9c9c9" stroke-width="0.9"/>
<text x="197.2" y="576.3" font-size="7" fill="#9a9a9a" text-anchor="middle">290</text>
<rect x="462.9" y="595.1" width="15" height="11" rx="3.5" fill="#fbfbfb" stroke="#c9c9c9" stroke-width="0.9"/>
<text x="470.4" y="603.2" font-size="7" fill="#9a9a9a" text-anchor="middle">71</text>
<rect x="346.1" y="611.5" width="15" height="11" rx="3.5" fill="#fbfbfb" stroke="#c9c9c9" stroke-width="0.9"/>
<text x="353.6" y="619.6" font-size="7" fill="#9a9a9a" text-anchor="middle">71</text>
<rect x="587.7" y="556.7" width="18" height="11" rx="3.5" fill="#fbfbfb" stroke="#c9c9c9" stroke-width="0.9"/>
<text x="596.7" y="564.8" font-size="7" fill="#9a9a9a" text-anchor="middle">130</text>
<rect x="558.9" y="701.5" width="18" height="11" rx="3.5" fill="#fbfbfb" stroke="#c9c9c9" stroke-width="0.9"/>
<text x="567.9" y="709.6" font-size="7" fill="#9a9a9a" text-anchor="middle">130</text>
<path d="M411.4 192.6 h10 v6 q0 3 -5 5 q-5 -2 -5 -5 z" fill="#fbfbfb" stroke="#bdbdbd" stroke-width="0.9"/>
<rect x="411.4" y="192.6" width="10" height="2.6" fill="#cfcfcf"/>
<text x="416.4" y="200.8" font-size="5.5" fill="#9a9a9a" text-anchor="middle" font-weight="700">35</text>
<path d="M359.8 328.7 h10 v6 q0 3 -5 5 q-5 -2 -5 -5 z" fill="#fbfbfb" stroke="#bdbdbd" stroke-width="0.9"/>
<rect x="359.8" y="328.7" width="10" height="2.6" fill="#cfcfcf"/>
<text x="364.8" y="336.9" font-size="5.5" fill="#9a9a9a" text-anchor="middle" font-weight="700">35</text>
<path d="M326.0 388.0 h10 v6 q0 3 -5 5 q-5 -2 -5 -5 z" fill="#fbfbfb" stroke="#bdbdbd" stroke-width="0.9"/>
<rect x="326.0" y="388.0" width="10" height="2.6" fill="#cfcfcf"/>
<text x="331.0" y="396.2" font-size="5.5" fill="#9a9a9a" text-anchor="middle" font-weight="700">35</text>
<path d="M214.0 669.3 h10 v6 q0 3 -5 5 q-5 -2 -5 -5 z" fill="#fbfbfb" stroke="#bdbdbd" stroke-width="0.9"/>
<rect x="214.0" y="669.3" width="10" height="2.6" fill="#cfcfcf"/>
<text x="219.0" y="677.5" font-size="5.5" fill="#9a9a9a" text-anchor="middle" font-weight="700">35</text>
</g>
<circle cx="282" cy="231" r="20" fill="#3b4061" fill-opacity="0.62"/><circle cx="282" cy="231" r="15.6" fill="#3b4061"/>
<circle cx="328.5" cy="221.4" r="20" fill="#3b4061" fill-opacity="0.62"/><circle cx="328.5" cy="221.4" r="15.6" fill="#3b4061"/>
<circle cx="353.7" cy="257.5" r="20" fill="#3b4061" fill-opacity="0.62"/><circle cx="353.7" cy="257.5" r="15.6" fill="#3b4061"/>
<circle cx="314" cy="271" r="20" fill="#3b4061" fill-opacity="0.62"/><circle cx="314" cy="271" r="15.6" fill="#3b4061"/>
<circle cx="271.6" cy="305.7" r="20" fill="#3b4061" fill-opacity="0.62"/><circle cx="271.6" cy="305.7" r="15.6" fill="#3b4061"/>
<circle cx="344.5" cy="317.5" r="20" fill="#3b4061" fill-opacity="0.62"/><circle cx="344.5" cy="317.5" r="15.6" fill="#3b4061"/>
<circle cx="323" cy="337" r="20" fill="#3b4061" fill-opacity="0.62"/><circle cx="323" cy="337" r="15.6" fill="#3b4061"/>
<circle cx="416" cy="333" r="20" fill="#3b4061" fill-opacity="0.62"/><circle cx="416" cy="333" r="15.6" fill="#3b4061"/>
<circle cx="389" cy="363" r="20" fill="#3b4061" fill-opacity="0.62"/><circle cx="389" cy="363" r="15.6" fill="#3b4061"/>
<circle cx="456" cy="365" r="20" fill="#3b4061" fill-opacity="0.62"/><circle cx="456" cy="365" r="15.6" fill="#3b4061"/>
<circle cx="276.25" cy="378.75" r="20" fill="#3b4061" fill-opacity="0.62"/><circle cx="276.25" cy="378.75" r="15.6" fill="#3b4061"/>
<circle cx="299.5" cy="368.75" r="20" fill="#3b4061" fill-opacity="0.62"/><circle cx="299.5" cy="368.75" r="15.6" fill="#3b4061"/>
<circle cx="327.5" cy="368.75" r="20" fill="#3b4061" fill-opacity="0.62"/><circle cx="327.5" cy="368.75" r="15.6" fill="#3b4061"/>
<circle cx="351" cy="381" r="20" fill="#3b4061" fill-opacity="0.62"/><circle cx="351" cy="381" r="15.6" fill="#3b4061"/>
<circle cx="411" cy="411" r="20" fill="#3b4061" fill-opacity="0.62"/><circle cx="411" cy="411" r="15.6" fill="#3b4061"/>
<circle cx="458" cy="408" r="20" fill="#3b4061" fill-opacity="0.62"/><circle cx="458" cy="408" r="15.6" fill="#3b4061"/>
<circle cx="238" cy="428.75" r="20" fill="#3b4061" fill-opacity="0.62"/><circle cx="238" cy="428.75" r="15.6" fill="#3b4061"/>
<circle cx="354" cy="423" r="20" fill="#3b4061" fill-opacity="0.62"/><circle cx="354" cy="423" r="15.6" fill="#3b4061"/>
<circle cx="370" cy="432.5" r="20" fill="#3b4061" fill-opacity="0.62"/><circle cx="370" cy="432.5" r="15.6" fill="#3b4061"/>
<circle cx="332" cy="445.5" r="20" fill="#3b4061" fill-opacity="0.62"/><circle cx="332" cy="445.5" r="15.6" fill="#3b4061"/>
<circle cx="280" cy="454.5" r="20" fill="#3b4061" fill-opacity="0.62"/><circle cx="280" cy="454.5" r="15.6" fill="#3b4061"/>
<circle cx="382.3" cy="478" r="20" fill="#3b4061" fill-opacity="0.62"/><circle cx="382.3" cy="478" r="15.6" fill="#3b4061"/>
<circle cx="317" cy="483" r="20" fill="#3b4061" fill-opacity="0.62"/><circle cx="317" cy="483" r="15.6" fill="#3b4061"/>
<circle cx="344.2" cy="491.75" r="20" fill="#3b4061" fill-opacity="0.62"/><circle cx="344.2" cy="491.75" r="15.6" fill="#3b4061"/>
<circle cx="214.5" cy="491" r="20" fill="#3b4061" fill-opacity="0.62"/><circle cx="214.5" cy="491" r="15.6" fill="#3b4061"/>
<circle cx="245.75" cy="501" r="20" fill="#3b4061" fill-opacity="0.62"/><circle cx="245.75" cy="501" r="15.6" fill="#3b4061"/>
<circle cx="279.5" cy="514" r="20" fill="#3b4061" fill-opacity="0.62"/><circle cx="279.5" cy="514" r="15.6" fill="#3b4061"/>
<circle cx="322" cy="540" r="20" fill="#3b4061" fill-opacity="0.62"/><circle cx="322" cy="540" r="15.6" fill="#3b4061"/>
<circle cx="182.5" cy="541" r="20" fill="#3b4061" fill-opacity="0.62"/><circle cx="182.5" cy="541" r="15.6" fill="#3b4061"/>
<circle cx="218.75" cy="546" r="20" fill="#3b4061" fill-opacity="0.62"/><circle cx="218.75" cy="546" r="15.6" fill="#3b4061"/>
<circle cx="236" cy="557" r="20" fill="#3b4061" fill-opacity="0.62"/><circle cx="236" cy="557" r="15.6" fill="#3b4061"/>
<circle cx="258" cy="573" r="20" fill="#3b4061" fill-opacity="0.62"/><circle cx="258" cy="573" r="15.6" fill="#3b4061"/>
<circle cx="312" cy="586" r="20" fill="#3b4061" fill-opacity="0.62"/><circle cx="312" cy="586" r="15.6" fill="#3b4061"/>
<circle cx="39" cy="519" r="20" fill="#3b4061" fill-opacity="0.62"/><circle cx="39" cy="519" r="15.6" fill="#3b4061"/>
<circle cx="135" cy="627" r="20" fill="#3b4061" fill-opacity="0.62"/><circle cx="135" cy="627" r="15.6" fill="#3b4061"/>
<text transform="translate(282 236.4) scale(0.94 1)" text-anchor="middle" font-family="Liberation Sans,sans-serif" font-weight="700" font-size="15.5" fill="#fff" stroke="#3b4061" stroke-width="0.220">34</text>
<text transform="translate(328.5 226.8) scale(0.94 1)" text-anchor="middle" font-family="Liberation Sans,sans-serif" font-weight="700" font-size="15.5" fill="#fff" stroke="#3b4061" stroke-width="0.220">18</text>
<text transform="translate(353.7 262.9) scale(0.94 1)" text-anchor="middle" font-family="Liberation Sans,sans-serif" font-weight="700" font-size="15.5" fill="#fff" stroke="#3b4061" stroke-width="0.220">15</text>
<text transform="translate(314 276.4) scale(0.94 1)" text-anchor="middle" font-family="Liberation Sans,sans-serif" font-weight="700" font-size="15.5" fill="#fff" stroke="#3b4061" stroke-width="0.220">44</text>
<text transform="translate(271.6 311.09999999999997) scale(0.94 1)" text-anchor="middle" font-family="Liberation Sans,sans-serif" font-weight="700" font-size="15.5" fill="#fff" stroke="#3b4061" stroke-width="0.220">17</text>
<text transform="translate(344.5 322.9) scale(0.94 1)" text-anchor="middle" font-family="Liberation Sans,sans-serif" font-weight="700" font-size="15.5" fill="#fff" stroke="#3b4061" stroke-width="0.220">14</text>
<text transform="translate(323 342.4) scale(0.94 1)" text-anchor="middle" font-family="Liberation Sans,sans-serif" font-weight="700" font-size="15.5" fill="#fff" stroke="#3b4061" stroke-width="0.220">9</text>
<text transform="translate(416 338.4) scale(0.94 1)" text-anchor="middle" font-family="Liberation Sans,sans-serif" font-weight="700" font-size="15.5" fill="#fff" stroke="#3b4061" stroke-width="0.220">7</text>
<text transform="translate(389 368.4) scale(0.94 1)" text-anchor="middle" font-family="Liberation Sans,sans-serif" font-weight="700" font-size="15.5" fill="#fff" stroke="#3b4061" stroke-width="0.220">13</text>
<text transform="translate(456 370.4) scale(0.94 1)" text-anchor="middle" font-family="Liberation Sans,sans-serif" font-weight="700" font-size="15.5" fill="#fff" stroke="#3b4061" stroke-width="0.220">18</text>
<text transform="translate(276.25 384.15) scale(0.94 1)" text-anchor="middle" font-family="Liberation Sans,sans-serif" font-weight="700" font-size="15.5" fill="#fff" stroke="#3b4061" stroke-width="0.220">35</text>
<text transform="translate(299.5 374.15) scale(0.94 1)" text-anchor="middle" font-family="Liberation Sans,sans-serif" font-weight="700" font-size="15.5" fill="#fff" stroke="#3b4061" stroke-width="0.220">7</text>
<text transform="translate(327.5 374.15) scale(0.94 1)" text-anchor="middle" font-family="Liberation Sans,sans-serif" font-weight="700" font-size="15.5" fill="#fff" stroke="#3b4061" stroke-width="0.220">8</text>
<text transform="translate(351 386.4) scale(0.94 1)" text-anchor="middle" font-family="Liberation Sans,sans-serif" font-weight="700" font-size="15.5" fill="#fff" stroke="#3b4061" stroke-width="0.220">5</text>
<text transform="translate(411 416.4) scale(0.94 1)" text-anchor="middle" font-family="Liberation Sans,sans-serif" font-weight="700" font-size="15.5" fill="#fff" stroke="#3b4061" stroke-width="0.220">2</text>
<text transform="translate(458 413.4) scale(0.94 1)" text-anchor="middle" font-family="Liberation Sans,sans-serif" font-weight="700" font-size="15.5" fill="#fff" stroke="#3b4061" stroke-width="0.220">9</text>
<text transform="translate(238 434.15) scale(0.94 1)" text-anchor="middle" font-family="Liberation Sans,sans-serif" font-weight="700" font-size="15.5" fill="#fff" stroke="#3b4061" stroke-width="0.220">13</text>
<text transform="translate(354 428.4) scale(0.94 1)" text-anchor="middle" font-family="Liberation Sans,sans-serif" font-weight="700" font-size="15.5" fill="#fff" stroke="#3b4061" stroke-width="0.220">5</text>
<text transform="translate(370 437.9) scale(0.94 1)" text-anchor="middle" font-family="Liberation Sans,sans-serif" font-weight="700" font-size="15.5" fill="#fff" stroke="#3b4061" stroke-width="0.220">14</text>
<text transform="translate(332 450.9) scale(0.94 1)" text-anchor="middle" font-family="Liberation Sans,sans-serif" font-weight="700" font-size="15.5" fill="#fff" stroke="#3b4061" stroke-width="0.220">16</text>
<text transform="translate(280 459.9) scale(0.94 1)" text-anchor="middle" font-family="Liberation Sans,sans-serif" font-weight="700" font-size="15.5" fill="#fff" stroke="#3b4061" stroke-width="0.220">23</text>
<text transform="translate(382.3 483.4) scale(0.94 1)" text-anchor="middle" font-family="Liberation Sans,sans-serif" font-weight="700" font-size="15.5" fill="#fff" stroke="#3b4061" stroke-width="0.220">19</text>
<text transform="translate(317 488.4) scale(0.94 1)" text-anchor="middle" font-family="Liberation Sans,sans-serif" font-weight="700" font-size="15.5" fill="#fff" stroke="#3b4061" stroke-width="0.220">10</text>
<text transform="translate(344.2 497.15) scale(0.94 1)" text-anchor="middle" font-family="Liberation Sans,sans-serif" font-weight="700" font-size="15.5" fill="#fff" stroke="#3b4061" stroke-width="0.220">9</text>
<text transform="translate(214.5 496.4) scale(0.94 1)" text-anchor="middle" font-family="Liberation Sans,sans-serif" font-weight="700" font-size="15.5" fill="#fff" stroke="#3b4061" stroke-width="0.220">20</text>
<text transform="translate(245.75 506.4) scale(0.94 1)" text-anchor="middle" font-family="Liberation Sans,sans-serif" font-weight="700" font-size="15.5" fill="#fff" stroke="#3b4061" stroke-width="0.220">27</text>
<text transform="translate(279.5 519.4) scale(0.94 1)" text-anchor="middle" font-family="Liberation Sans,sans-serif" font-weight="700" font-size="15.5" fill="#fff" stroke="#3b4061" stroke-width="0.220">24</text>
<text transform="translate(322 545.4) scale(0.94 1)" text-anchor="middle" font-family="Liberation Sans,sans-serif" font-weight="700" font-size="15.5" fill="#fff" stroke="#3b4061" stroke-width="0.220">3</text>
<text transform="translate(182.5 546.4) scale(0.94 1)" text-anchor="middle" font-family="Liberation Sans,sans-serif" font-weight="700" font-size="15.5" fill="#fff" stroke="#3b4061" stroke-width="0.220">29</text>
<text transform="translate(218.75 551.4) scale(0.94 1)" text-anchor="middle" font-family="Liberation Sans,sans-serif" font-weight="700" font-size="15.5" fill="#fff" stroke="#3b4061" stroke-width="0.220">26</text>
<text transform="translate(236 562.4) scale(0.94 1)" text-anchor="middle" font-family="Liberation Sans,sans-serif" font-weight="700" font-size="15.5" fill="#fff" stroke="#3b4061" stroke-width="0.220">7</text>
<text transform="translate(258 578.4) scale(0.94 1)" text-anchor="middle" font-family="Liberation Sans,sans-serif" font-weight="700" font-size="15.5" fill="#fff" stroke="#3b4061" stroke-width="0.220">2</text>
<text transform="translate(312 591.4) scale(0.94 1)" text-anchor="middle" font-family="Liberation Sans,sans-serif" font-weight="700" font-size="15.5" fill="#fff" stroke="#3b4061" stroke-width="0.220">7</text>
<text transform="translate(39 524.4) scale(0.94 1)" text-anchor="middle" font-family="Liberation Sans,sans-serif" font-weight="700" font-size="15.5" fill="#fff" stroke="#3b4061" stroke-width="0.220">1</text>
<text transform="translate(135 632.4) scale(0.94 1)" text-anchor="middle" font-family="Liberation Sans,sans-serif" font-weight="700" font-size="15.5" fill="#fff" stroke="#3b4061" stroke-width="0.220">11</text>
</svg>
<div class="a" style="left:-20px;top:139px;width:117px;height:29px;background:#fff;border-radius:3px;box-shadow:3px 4px 10px rgba(0,0,0,.28)"></div>
<div class="a" style="left:51px;top:139px;width:1px;height:29px;background:#ececec"></div>
<span class="t" style="left:-5.24px;top:147.92px;font-size:12.5px;font-weight:400;color:#6b6b6b;transform:scaleX(0.8957);transform-origin:100% 0;">e Data</span>
<span class="t" style="left:31.90px;top:147.92px;font-size:12.5px;font-weight:400;color:#6b6b6b;transform:scaleX(0.8036);transform-origin:0 0;">:</span>
<svg class="a" style="left:66.500px;top:147px" width="15" height="12" viewBox="0 0 15 12"><path d="M7.500 1.200 L1 6.600 L2.600 6.600 L2.600 11.500 L6.200 11.500 L6.200 8 L8.800 8 L8.800 11.500 L12.400 11.500 L12.400 6.600 L14 6.600 L11.600 4.600 L11.600 1.800 L10.200 1.800 L10.200 3.400 Z" fill="#b3b3b3"/></svg>
<div class="a" style="left:477.500px;top:139px;width:134px;height:29px;background:#fff;border-radius:2px;box-shadow:1px 2px 5px rgba(0,0,0,.25)"></div>
<svg class="a" style="left:484.500px;top:147.500px" width="9" height="9" viewBox="0 0 9 9"><rect x="0.500" y="0.500" width="7.500" height="7.500" rx="1.200" fill="#fff" stroke="#8a8a8a" stroke-width="0.900"/><path d="M2 4.200 L3.700 6 L6.800 1.800" fill="none" stroke="#333" stroke-width="1.500"/></svg>
<span class="t" style="left:498.40px;top:146.70px;font-size:9.8px;font-weight:400;color:#6f6f6f;transform:scaleX(0.9217);transform-origin:0 0;">Search as I move the map</span>
<div class="a" style="left:616px;top:139px;width:25px;height:45px;background:#fff;border-radius:2px;box-shadow:6px 2px 9px rgba(0,0,0,.33)"></div>
<div class="a" style="left:616px;top:161px;width:25px;height:1px;background:#e6e6e6"></div>
<div class="a" style="left:624px;top:149px;width:9px;height:1.400px;background:#666"></div><div class="a" style="left:627.800px;top:145.200px;width:1.400px;height:9px;background:#666"></div>
<div class="a" style="left:626px;top:172.500px;width:5px;height:1.600px;background:#666"></div>
<div class="a" style="left:647px;top:124px;width:8px;height:645px;background:linear-gradient(90deg,rgba(0,0,0,0),rgba(0,0,0,.07))"></div>
<div class="a" style="left:655px;top:125px;width:369px;height:38px;background:#eef0f5"></div>
<div class="a" style="left:655px;top:125px;width:81px;height:38px;background:#fff"></div>
<span class="t" style="left:666.00px;top:137.67px;font-size:12.2px;font-weight:400;color:#353535;transform:scaleX(0.9811);transform-origin:0 0;">Investment</span>
<span class="t" style="left:746.75px;top:137.67px;font-size:12.2px;font-weight:400;color:#353535;transform:scaleX(0.9933);transform-origin:0 0;">Airbnb</span>
<span class="t" style="left:804.00px;top:137.67px;font-size:12.2px;font-weight:400;color:#353535;transform:scaleX(0.9698);transform-origin:0 0;">Traditional</span>
<span class="t" style="left:881.00px;top:137.67px;font-size:12.2px;font-weight:400;color:#353535;transform:scaleX(0.9603);transform-origin:0 0;">Local News</span>
<span class="t" style="left:973.00px;top:136.70px;font-size:9.8px;font-weight:400;color:#3d8fd1;transform:scaleX(0.9341);transform-origin:0 0;">Sort by</span>
<svg class="a" style="left:1005px;top:140.5px" width="7" height="4.6" viewBox="0 0 7 4.6"><path d="M0.5 0.6 L3.5 3.6 L6.5 0.6" fill="none" stroke="#3d8fd1" stroke-width="1.1"/></svg>
<span class="t" style="left:672.50px;top:177.17px;font-size:12.2px;font-weight:400;color:#3a3f55;transform:scaleX(0.9013);transform-origin:0 0;">521 homes found in</span>
<span class="t" style="left:775.50px;top:177.17px;font-size:12.2px;font-weight:400;color:#2a9fd8;transform:scaleX(0.8929);transform-origin:0 0;-webkit-text-stroke:0.450px #2a9fd8;">Austin, TX</span>
<svg class="a" style="left:912px;top:180.500px" width="10" height="11" viewBox="0 0 20 22"><path d="M10 0.500 C11.200 0.500 12 1.300 12 2.400 C15.500 3.400 16.800 6.400 16.800 9.600 C16.800 13.600 17.800 15.400 19.600 17 L0.400 17 C2.200 15.400 3.200 13.600 3.200 9.600 C3.200 6.400 4.500 3.400 8 2.400 C8 1.300 8.800 0.500 10 0.500 Z M7.400 18.400 L12.600 18.400 C12.600 20.200 11.600 21.400 10 21.400 C8.400 21.400 7.400 20.200 7.400 18.400 Z" fill="#f4623a"/></svg>
<span class="t" style="left:926.00px;top:179.31px;font-size:11.8px;font-weight:700;color:#f4623a;transform:scaleX(0.8721);transform-origin:0 0;-webkit-text-stroke:0;">Get search alerts</span>
<div class="a" style="left:655px;top:205px;width:369px;height:1.500px;background:#e4e4e4"></div>
<div class="a" style="left:1019.500px;top:208px;width:3px;height:297px;background:#dcdcdc;border-radius:1.500px"></div>
<svg width="0" height="0" style="position:absolute"><defs><filter id="pb" x="-5%" y="-5%" width="110%" height="110%" color-interpolation-filters="sRGB"><feTurbulence type="fractalNoise" baseFrequency="0.120" numOctaves="3" seed="4" result="n"/><feDisplacementMap in="SourceGraphic" in2="n" scale="5" xChannelSelector="R" yChannelSelector="G" result="d"/><feGaussianBlur in="d" stdDeviation="0.700" result="b"/><feTurbulence type="fractalNoise" baseFrequency="0.450" numOctaves="2" seed="9" result="n2"/><feColorMatrix in="n2" type="matrix" values="0 0 0 0 0  0 0 0 0 0  0 0 0 0 0  0.320 0 0 0 -0.130" result="a"/><feComposite in="a" in2="b" operator="in" result="dark"/><feMerge><feMergeNode in="b"/><feMergeNode in="dark"/></feMerge></filter></defs></svg>
<div class="a" style="left:670.500px;top:215.5px;width:97.500px;height:90.500px;overflow:hidden;background:#777"><svg width="97.500" height="90.500" viewBox="0 0 97.500 90.500" style="display:block"><rect width="97.500" height="90.500" fill="#f2f5f3"/><g filter="url(#pb)"><rect x="0" y="0" width="98" height="60" fill="#f2f5f3"/><path d="M0 0 H53 L57 12 L60 24 L52 36 L0 40 Z" fill="#3f6a2b"/><ellipse cx="10" cy="8" rx="9" ry="7" fill="#5d8c3a"/><ellipse cx="30" cy="18" rx="10" ry="8" fill="#4f7f33"/><ellipse cx="44" cy="8" rx="8" ry="6" fill="#6b9a44"/><ellipse cx="18" cy="28" rx="12" ry="6" fill="#34591f"/><ellipse cx="40" cy="30" rx="9" ry="6" fill="#2f5220"/><ellipse cx="50" cy="20" rx="6" ry="8" fill="#527f35"/><ellipse cx="5" cy="22" rx="6" ry="8" fill="#6f9d49"/><ellipse cx="75" cy="28" rx="17" ry="12" fill="#4b6c38"/><ellipse cx="70" cy="24" rx="7" ry="5" fill="#5f8145"/><ellipse cx="82" cy="30" rx="7" ry="6" fill="#3f5f2f"/><ellipse cx="64" cy="33" rx="6" ry="5" fill="#55763d"/><ellipse cx="90" cy="46" rx="11" ry="14" fill="#5f9a3a"/><ellipse cx="86" cy="40" rx="6" ry="6" fill="#79b04a"/><path d="M0 37 L24 35 L30 31 L76 42 L76 58 L0 59 Z" fill="#6d8383"/><path d="M22 34 L30 30.500 L76 41.500 L76 44.500 L30 35.500 L26 40 Z" fill="#8d7d5e"/><path d="M0 36 L24 35 L26 40 L0 42 Z" fill="#5f4f3f"/><rect x="12" y="46" width="6" height="7" fill="#4f6a75"/><rect x="33" y="44" width="2" height="13" fill="#a9b8b6"/><rect x="44" y="45" width="2" height="13" fill="#a9b8b6"/><rect x="74" y="44" width="4" height="14" fill="#9fb0bb"/><path d="M0 58 L76 57 L98 56 V72 H0 Z" fill="#8fbc4e"/><path d="M20 62 Q50 56 98 64 V70 H30 Z" fill="#a8cc5c"/><path d="M0 58 H60 L40 61 H0 Z" fill="#5d8c35"/><path d="M68 66 Q80 70 98 69 V73 H66 Z" fill="#26332a"/><rect x="0" y="71" width="98" height="20" fill="#8fbc4e"/></g></svg></div>
<div class="a" style="left:670.500px;top:286.0px;width:97.500px;height:20px;background:rgba(44,48,66,.76)"></div>
<span class="t" style="left:680.00px;top:289.17px;font-size:12.2px;font-weight:700;color:#fff;transform:scaleX(0.9244);transform-origin:0 0;">$518,500</span>
<svg class="a" style="left:672.500px;top:218.5px" width="15.500" height="13.500" viewBox="0 0 22 19"><path d="M11 17.600 L2.600 9.600 C0.200 7 0.800 3.400 3.200 1.900 C5.600 0.500 8.800 1.200 11 4.200 C13.200 1.200 16.400 0.500 18.800 1.900 C21.200 3.400 21.800 7 19.400 9.600 Z" fill="rgba(40,40,40,.35)" stroke="#fff" stroke-width="1.700" stroke-linejoin="round"/></svg>
<span class="t" style="left:778.50px;top:215.84px;font-size:12px;font-weight:400;color:#333;transform:scaleX(0.9234);transform-origin:0 0;">804 W Oltorf St</span>
<span class="t" style="left:778.50px;top:229.84px;font-size:12px;font-weight:400;color:#2a9fd8;transform:scaleX(0.9243);transform-origin:0 0;-webkit-text-stroke:0.450px #2a9fd8;">Bouldin</span>
<svg class="a" style="left:819.5px;top:231.0px" width="11" height="10" viewBox="0 0 22 20"><path d="M9 1.500 H5 C2.800 1.500 1.500 2.800 1.500 5 V15 C1.500 17.200 2.800 18.500 5 18.500 H9" fill="none" stroke="#2a9fd8" stroke-width="2.600" stroke-linecap="round"/><path d="M7.500 8 H14 V4 L21 10 L14 16 V12 H7.500 Z" fill="#2a9fd8"/></svg>
<span class="t" style="left:778.50px;top:247.88px;font-size:9.3px;font-weight:400;color:#4a4a4a;transform:scaleX(0.9178);transform-origin:0 0;">3 beds | 2 baths | 1877 sq.ft</span>
<span class="t" style="left:778.50px;top:272.70px;font-size:9.8px;font-weight:400;color:#3c3c3c;transform:scaleX(0.8816);transform-origin:0 0;">CASH ON CASH</span>
<span class="t" style="left:778.50px;top:292.70px;font-size:9.8px;font-weight:400;color:#3c3c3c;transform:scaleX(0.8525);transform-origin:0 0;">CAP RATE</span>
<div class="a" style="left:778px;top:288.0px;width:234px;height:1px;background:#efefef"></div>
<span class="t" style="left:905.22px;top:272.70px;font-size:9.8px;font-weight:400;color:#16b98f;transform:scaleX(0.9485);transform-origin:100% 0;-webkit-text-stroke:0.400px #16b98f;">2.59%</span>
<span class="t" style="left:875.52px;top:272.70px;font-size:9.8px;font-weight:400;color:#3c3c3c;transform:scaleX(0.9178);transform-origin:100% 0;">Airbnb</span>
<span class="t" style="left:948.58px;top:272.70px;font-size:9.8px;font-weight:400;color:#3c3c3c;transform:scaleX(0.8217);transform-origin:0 0;">Trad.</span>
<span class="t" style="left:968.64px;top:272.70px;font-size:9.8px;font-weight:400;color:#16b98f;transform:scaleX(0.9485);transform-origin:100% 0;-webkit-text-stroke:0.400px #16b98f;">2.40%</span>
<span class="t" style="left:905.22px;top:292.70px;font-size:9.8px;font-weight:400;color:#7a7a7a;transform:scaleX(0.9485);transform-origin:100% 0;">6.48%</span>
<span class="t" style="left:875.52px;top:292.70px;font-size:9.8px;font-weight:400;color:#3c3c3c;transform:scaleX(0.9178);transform-origin:100% 0;">Airbnb</span>
<span class="t" style="left:948.58px;top:292.70px;font-size:9.8px;font-weight:400;color:#3c3c3c;transform:scaleX(0.8217);transform-origin:0 0;">Trad.</span>
<span class="t" style="left:968.64px;top:292.70px;font-size:9.8px;font-weight:400;color:#7a7a7a;transform:scaleX(0.9485);transform-origin:100% 0;">6.27%</span>
<div class="a" style="left:655px;top:315.0px;width:369px;height:1.500px;background:#e4e4e4"></div>
<div class="a" style="left:670.500px;top:325.0px;width:97.500px;height:90.500px;overflow:hidden;background:#777"><svg width="97.500" height="90.500" viewBox="0 0 97.500 90.500" style="display:block"><rect width="97.500" height="90.500" fill="#8a8250"/><g filter="url(#pb)"><rect x="0" y="0" width="98" height="34" fill="#8a8250"/><ellipse cx="10" cy="8" rx="10" ry="7" fill="#5f5f35"/><ellipse cx="30" cy="10" rx="12" ry="9" fill="#7d7a48"/><ellipse cx="50" cy="12" rx="10" ry="10" fill="#6c6d3d"/><ellipse cx="20" cy="22" rx="12" ry="8" fill="#9a8d5a"/><ellipse cx="42" cy="24" rx="12" ry="7" fill="#857c4b"/><ellipse cx="60" cy="6" rx="8" ry="6" fill="#77764a"/><ellipse cx="6" cy="26" rx="6" ry="8" fill="#6b5038"/><path d="M62 8 L78 2 L98 4 V24 L70 22 L60 26 Z" fill="#eef1f3"/><ellipse cx="88" cy="4" rx="10" ry="4" fill="#56583a"/><ellipse cx="70" cy="3" rx="6" ry="3" fill="#6b6a42"/><ellipse cx="92" cy="14" rx="6" ry="4" fill="#7b8a5a"/><path d="M58 34 L60 27 L82 17 L98 25 V34 Z" fill="#f1f1ee"/><path d="M12 31 L58 30 L98 33 V54 L12 55 Z" fill="#e4e4e0"/><path d="M12 30 L58 29 V33 L12 34 Z" fill="#c9b59a"/><rect x="33" y="36" width="7.500" height="10" fill="#2f2f2c"/><rect x="51.500" y="36" width="4.500" height="9" fill="#44443f"/><rect x="62" y="36" width="7" height="10" fill="#2f2f2c"/><path d="M78 36 H98 V53 H78 Z" fill="#4a4d4c"/><path d="M84 50 L98 38 V43 L90 52 Z" fill="#1d1d1d"/><rect x="88" y="48" width="10" height="6" fill="#23262e"/><rect x="75" y="35" width="2" height="19" fill="#f4f4f2"/><path d="M0 54 H98 V72 H0 Z" fill="#a99c64"/><ellipse cx="30" cy="60" rx="20" ry="4" fill="#bfa772"/><ellipse cx="70" cy="58" rx="20" ry="3" fill="#c9b98c"/><ellipse cx="60" cy="66" rx="25" ry="4" fill="#8f9a58"/><ellipse cx="15" cy="68" rx="12" ry="3" fill="#7f7a4a"/><path d="M5 18 L13 18 L14 40 L13 72 L6 72 L7 40 Z" fill="#8b6a58"/><rect x="4" y="28" width="4" height="18" fill="#5f4335"/><rect x="0" y="71" width="98" height="20" fill="#55565f"/></g></svg></div>
<div class="a" style="left:670.500px;top:395.5px;width:97.500px;height:20px;background:rgba(44,48,66,.76)"></div>
<span class="t" style="left:680.00px;top:398.67px;font-size:12.2px;font-weight:700;color:#fff;transform:scaleX(0.9244);transform-origin:0 0;">$399,700</span>
<svg class="a" style="left:672.500px;top:328.0px" width="15.500" height="13.500" viewBox="0 0 22 19"><path d="M11 17.600 L2.600 9.600 C0.200 7 0.800 3.400 3.200 1.900 C5.600 0.500 8.800 1.200 11 4.200 C13.200 1.200 16.400 0.500 18.800 1.900 C21.200 3.400 21.800 7 19.400 9.600 Z" fill="rgba(40,40,40,.35)" stroke="#fff" stroke-width="1.700" stroke-linejoin="round"/></svg>
<span class="t" style="left:778.50px;top:325.34px;font-size:12px;font-weight:400;color:#333;transform:scaleX(0.9402);transform-origin:0 0;">905 Aurora Cir</span>
<span class="t" style="left:778.50px;top:339.34px;font-size:12px;font-weight:400;color:#2a9fd8;transform:scaleX(0.9368);transform-origin:0 0;-webkit-text-stroke:0.450px #2a9fd8;">Brentwood</span>
<svg class="a" style="left:836.2px;top:340.5px" width="11" height="10" viewBox="0 0 22 20"><path d="M9 1.500 H5 C2.800 1.500 1.500 2.800 1.500 5 V15 C1.500 17.200 2.800 18.500 5 18.500 H9" fill="none" stroke="#2a9fd8" stroke-width="2.600" stroke-linecap="round"/><path d="M7.500 8 H14 V4 L21 10 L14 16 V12 H7.500 Z" fill="#2a9fd8"/></svg>
<span class="t" style="left:778.50px;top:357.38px;font-size:9.3px;font-weight:400;color:#4a4a4a;transform:scaleX(0.9178);transform-origin:0 0;">3 beds | 2 baths | 1400 sq.ft</span>
<span class="t" style="left:778.50px;top:382.20px;font-size:9.8px;font-weight:400;color:#3c3c3c;transform:scaleX(0.8816);transform-origin:0 0;">CASH ON CASH</span>
<span class="t" style="left:778.50px;top:402.20px;font-size:9.8px;font-weight:400;color:#3c3c3c;transform:scaleX(0.8525);transform-origin:0 0;">CAP RATE</span>
<div class="a" style="left:778px;top:397.5px;width:234px;height:1px;background:#efefef"></div>
<span class="t" style="left:905.22px;top:382.20px;font-size:9.8px;font-weight:400;color:#16b98f;transform:scaleX(0.8567);transform-origin:100% 0;-webkit-text-stroke:0.400px #16b98f;">0.41%</span>
<span class="t" style="left:878.07px;top:382.20px;font-size:9.8px;font-weight:400;color:#3c3c3c;transform:scaleX(0.9178);transform-origin:100% 0;">Airbnb</span>
<span class="t" style="left:948.58px;top:382.20px;font-size:9.8px;font-weight:400;color:#3c3c3c;transform:scaleX(0.8217);transform-origin:0 0;">Trad.</span>
<span class="t" style="left:968.64px;top:382.20px;font-size:9.8px;font-weight:400;color:#16b98f;transform:scaleX(0.9485);transform-origin:100% 0;-webkit-text-stroke:0.400px #16b98f;">2.06%</span>
<span class="t" style="left:905.22px;top:402.20px;font-size:9.8px;font-weight:400;color:#7a7a7a;transform:scaleX(0.9485);transform-origin:100% 0;">4.33%</span>
<span class="t" style="left:875.52px;top:402.20px;font-size:9.8px;font-weight:400;color:#3c3c3c;transform:scaleX(0.9178);transform-origin:100% 0;">Airbnb</span>
<span class="t" style="left:948.58px;top:402.20px;font-size:9.8px;font-weight:400;color:#3c3c3c;transform:scaleX(0.8217);transform-origin:0 0;">Trad.</span>
<span class="t" style="left:968.64px;top:402.20px;font-size:9.8px;font-weight:400;color:#7a7a7a;transform:scaleX(0.9485);transform-origin:100% 0;">6.08%</span>
<div class="a" style="left:655px;top:424.5px;width:369px;height:1.500px;background:#e4e4e4"></div>
<div class="a" style="left:670.500px;top:434.5px;width:97.500px;height:90.500px;overflow:hidden;background:#777"><svg width="97.500" height="90.500" viewBox="0 0 97.500 90.500" style="display:block"><rect width="97.500" height="90.500" fill="#e6ecf0"/><g filter="url(#pb)"><rect x="0" y="0" width="98" height="72" fill="#e6ecf0"/><path d="M62 12 Q70 0 98 0 V62 H62 Z" fill="#46702f"/><ellipse cx="78" cy="18" rx="12" ry="10" fill="#54823a"/><ellipse cx="90" cy="34" rx="8" ry="12" fill="#3b6128"/><ellipse cx="72" cy="40" rx="10" ry="9" fill="#4d7a35"/><ellipse cx="86" cy="52" rx="10" ry="8" fill="#5f8a3f"/><path d="M0 12 Q10 8 15 20 L17 44 L0 46 Z" fill="#40602f"/><ellipse cx="12" cy="34" rx="6" ry="9" fill="#557a3a"/><path d="M48 2 L24 25 L25 31 L66 30 L66 20 Z" fill="#8d2f2c"/><path d="M48 2 L24 25 L26 26 L48 5 L65 21 L66 19 Z" fill="#6a2220"/><rect x="44.500" y="9.500" width="8" height="12" fill="#e5e2dc"/><rect x="46" y="11" width="5" height="9.500" fill="#9fb0bd"/><rect x="25" y="30" width="44" height="16" fill="#aab594"/><rect x="25" y="30" width="44" height="2" fill="#7c2a28"/><rect x="25" y="31" width="2.500" height="16" fill="#ece8df"/><rect x="43.500" y="31" width="3" height="16" fill="#ece8df"/><rect x="66" y="31" width="2.500" height="16" fill="#ece8df"/><rect x="29" y="33" width="12" height="11" fill="#5f6a55"/><rect x="48" y="33" width="14" height="11" fill="#7f8f78"/><path d="M0 38 L9 42 V62 H0 Z" fill="#6b4f3b"/><rect x="0" y="44" width="98" height="28" fill="#6b7f3d"/><ellipse cx="22" cy="52" rx="12" ry="8" fill="#87a64b"/><ellipse cx="40" cy="50" rx="10" ry="7" fill="#5f8035"/><ellipse cx="58" cy="54" rx="10" ry="8" fill="#8aa850"/><ellipse cx="76" cy="58" rx="12" ry="7" fill="#6a4a35"/><ellipse cx="90" cy="62" rx="8" ry="6" fill="#7a5a40"/><ellipse cx="8" cy="64" rx="8" ry="5" fill="#3f6a2f"/><ellipse cx="48" cy="62" rx="14" ry="5" fill="#7a4f38"/><ellipse cx="30" cy="64" rx="8" ry="5" fill="#8a3f30"/><rect x="33" y="58" width="5" height="11" fill="#b5c545"/><rect x="84" y="50" width="1.500" height="20" fill="#b9a890"/><rect x="60" y="50" width="1.500" height="20" fill="#a08870"/><rect x="0" y="71" width="98" height="20" fill="#7a7f95"/></g></svg></div>
<div class="a" style="left:670.500px;top:505.0px;width:97.500px;height:20px;background:rgba(44,48,66,.76)"></div>
<span class="t" style="left:680.00px;top:508.17px;font-size:12.2px;font-weight:700;color:#fff;transform:scaleX(0.9244);transform-origin:0 0;">$649,900</span>
<svg class="a" style="left:672.500px;top:437.5px" width="15.500" height="13.500" viewBox="0 0 22 19"><path d="M11 17.600 L2.600 9.600 C0.200 7 0.800 3.400 3.200 1.900 C5.600 0.500 8.800 1.200 11 4.200 C13.200 1.200 16.400 0.500 18.800 1.900 C21.200 3.400 21.800 7 19.400 9.600 Z" fill="rgba(40,40,40,.35)" stroke="#fff" stroke-width="1.700" stroke-linejoin="round"/></svg>
<span class="t" style="left:778.50px;top:434.84px;font-size:12px;font-weight:400;color:#333;transform:scaleX(0.8279);transform-origin:0 0;">1508 E 11th St</span>
<span class="t" style="left:778.50px;top:448.84px;font-size:12px;font-weight:400;color:#2a9fd8;transform:scaleX(0.8965);transform-origin:0 0;-webkit-text-stroke:0.450px #2a9fd8;">Central East Austin</span>
<svg class="a" style="left:874.0px;top:450.0px" width="11" height="10" viewBox="0 0 22 20"><path d="M9 1.500 H5 C2.800 1.500 1.500 2.800 1.500 5 V15 C1.500 17.200 2.800 18.500 5 18.500 H9" fill="none" stroke="#2a9fd8" stroke-width="2.600" stroke-linecap="round"/><path d="M7.500 8 H14 V4 L21 10 L14 16 V12 H7.500 Z" fill="#2a9fd8"/></svg>
<span class="t" style="left:778.50px;top:466.88px;font-size:9.3px;font-weight:400;color:#4a4a4a;transform:scaleX(0.9178);transform-origin:0 0;">3 beds | 3 baths | 1625 sq.ft</span>
<span class="t" style="left:778.50px;top:491.70px;font-size:9.8px;font-weight:400;color:#3c3c3c;transform:scaleX(0.8816);transform-origin:0 0;">CASH ON CASH</span>
<span class="t" style="left:778.50px;top:511.70px;font-size:9.8px;font-weight:400;color:#3c3c3c;transform:scaleX(0.8525);transform-origin:0 0;">CAP RATE</span>
<div class="a" style="left:778px;top:507.0px;width:234px;height:1px;background:#efefef"></div>
<span class="t" style="left:905.22px;top:491.70px;font-size:9.8px;font-weight:400;color:#16b98f;transform:scaleX(0.8567);transform-origin:100% 0;-webkit-text-stroke:0.400px #16b98f;">1.26%</span>
<span class="t" style="left:878.07px;top:491.70px;font-size:9.8px;font-weight:400;color:#3c3c3c;transform:scaleX(0.9178);transform-origin:100% 0;">Airbnb</span>
<span class="t" style="left:952.40px;top:491.70px;font-size:9.8px;font-weight:400;color:#3c3c3c;transform:scaleX(0.8217);transform-origin:0 0;">Trad.</span>
<span class="t" style="left:965.54px;top:491.70px;font-size:9.8px;font-weight:400;color:#16b98f;transform:scaleX(0.6910);transform-origin:100% 0;-webkit-text-stroke:0.400px #16b98f;">1.11%</span>
<span class="t" style="left:905.22px;top:511.70px;font-size:9.8px;font-weight:400;color:#7a7a7a;transform:scaleX(0.9485);transform-origin:100% 0;">4.95%</span>
<span class="t" style="left:875.52px;top:511.70px;font-size:9.8px;font-weight:400;color:#3c3c3c;transform:scaleX(0.9178);transform-origin:100% 0;">Airbnb</span>
<span class="t" style="left:948.58px;top:511.70px;font-size:9.8px;font-weight:400;color:#3c3c3c;transform:scaleX(0.8217);transform-origin:0 0;">Trad.</span>
<span class="t" style="left:968.64px;top:511.70px;font-size:9.8px;font-weight:400;color:#7a7a7a;transform:scaleX(0.9485);transform-origin:100% 0;">4.79%</span>
<div class="a" style="left:655px;top:534.0px;width:369px;height:1.500px;background:#e4e4e4"></div>
<div class="a" style="left:670.500px;top:544.0px;width:97.500px;height:90.500px;overflow:hidden;background:#777"><svg width="97.500" height="90.500" viewBox="0 0 97.500 90.500" style="display:block"><rect width="97.500" height="90.500" fill="#6a9150"/><g filter="url(#pb)"><rect x="0" y="0" width="98" height="72" fill="#6a9150"/><ellipse cx="12" cy="10" rx="12" ry="9" fill="#5b8443"/><ellipse cx="34" cy="8" rx="12" ry="8" fill="#7ca55f"/><ellipse cx="54" cy="14" rx="10" ry="9" fill="#8db56c"/><ellipse cx="20" cy="28" rx="14" ry="10" fill="#6f9a55"/><ellipse cx="44" cy="30" rx="12" ry="9" fill="#5f8a48"/><ellipse cx="8" cy="40" rx="10" ry="8" fill="#7aa35c"/><ellipse cx="30" cy="44" rx="12" ry="6" fill="#4f7a3d"/><ellipse cx="64" cy="6" rx="8" ry="5" fill="#a5c78a"/><ellipse cx="58" cy="26" rx="8" ry="6" fill="#9cc07a"/><path d="M60 0 H70 L72 6 L62 8 Z" fill="#f0f4f2"/><path d="M84 0 H98 V72 H84 Z" fill="#b4b9ac"/><ellipse cx="92" cy="8" rx="7" ry="8" fill="#7f9a66"/><ellipse cx="94" cy="24" rx="5" ry="8" fill="#96a888"/><rect x="86" y="34" width="12" height="36" fill="#d9d5cf"/><path d="M48 30 L62 23 L82 30 V62 H48 Z" fill="#3fa18f"/><path d="M46 31 L62 22 L84 31 L83 33 L62 25 L47 33 Z" fill="#2f8f80"/><rect x="60" y="32" width="22" height="4" fill="#e9eeea"/><rect x="66" y="37" width="15" height="4.500" fill="#a53a35"/><rect x="66" y="42" width="5" height="14" fill="#2c3a36"/><rect x="72" y="44" width="10" height="12" fill="#55b5a5"/><rect x="38" y="40" width="24" height="22" fill="#86a89c"/><rect x="46" y="42" width="1.500" height="20" fill="#d5ddd8"/><rect x="54" y="42" width="1.500" height="20" fill="#d5ddd8"/><rect x="36" y="50" width="14" height="12" fill="#9fc8c8"/><path d="M50 0 L58 2 L76 14 L74 17 L54 6 Z" fill="#4a4038"/><path d="M74 0 H84 L83 20 L88 42 L86 70 H78 L80 44 L76 22 Z" fill="#4b4139"/><path d="M90 0 H96 L88 24 L84 22 Z" fill="#51473e"/><rect x="0" y="46" width="40" height="24" fill="#4b4c42"/><ellipse cx="10" cy="50" rx="8" ry="3" fill="#5f6a4a"/><ellipse cx="28" cy="52" rx="8" ry="3" fill="#3f4438"/><rect x="8" y="62" width="7" height="8" fill="#cdbba5"/><rect x="17" y="63" width="9" height="7" fill="#b88f7f"/><rect x="28" y="63" width="4" height="7" fill="#cdbba5"/><rect x="56" y="55" width="6" height="15" fill="#f0f0ee"/><rect x="64" y="58" width="8" height="12" fill="#e3e3e0"/><path d="M62 66 L76 62 V70 H62 Z" fill="#c9c7bb"/><rect x="0" y="71" width="98" height="20" fill="#777c92"/></g></svg></div>
<div class="a" style="left:670.500px;top:614.5px;width:97.500px;height:20px;background:rgba(44,48,66,.76)"></div>
<span class="t" style="left:680.00px;top:617.67px;font-size:12.2px;font-weight:700;color:#fff;transform:scaleX(0.9244);transform-origin:0 0;">$429,000</span>
<svg class="a" style="left:672.500px;top:547.0px" width="15.500" height="13.500" viewBox="0 0 22 19"><path d="M11 17.600 L2.600 9.600 C0.200 7 0.800 3.400 3.200 1.900 C5.600 0.500 8.800 1.200 11 4.200 C13.200 1.200 16.400 0.500 18.800 1.900 C21.200 3.400 21.800 7 19.400 9.600 Z" fill="rgba(40,40,40,.35)" stroke="#fff" stroke-width="1.700" stroke-linejoin="round"/></svg>
<span class="t" style="left:778.50px;top:544.34px;font-size:12px;font-weight:400;color:#333;transform:scaleX(0.8346);transform-origin:0 0;">1401 E 3rd St</span>
<span class="t" style="left:778.50px;top:558.34px;font-size:12px;font-weight:400;color:#2a9fd8;transform:scaleX(0.8777);transform-origin:0 0;-webkit-text-stroke:0.450px #2a9fd8;">East Cesar Chavez</span>
<svg class="a" style="left:873.2px;top:559.5px" width="11" height="10" viewBox="0 0 22 20"><path d="M9 1.500 H5 C2.800 1.500 1.500 2.800 1.500 5 V15 C1.500 17.200 2.800 18.500 5 18.500 H9" fill="none" stroke="#2a9fd8" stroke-width="2.600" stroke-linecap="round"/><path d="M7.500 8 H14 V4 L21 10 L14 16 V12 H7.500 Z" fill="#2a9fd8"/></svg>
<span class="t" style="left:778.50px;top:576.38px;font-size:9.3px;font-weight:400;color:#4a4a4a;transform:scaleX(0.8882);transform-origin:0 0;">3 beds | 1 baths | 1142 sq.ft</span>
<span class="t" style="left:778.50px;top:601.20px;font-size:9.8px;font-weight:400;color:#3c3c3c;transform:scaleX(0.8816);transform-origin:0 0;">CASH ON CASH</span>
<span class="t" style="left:778.50px;top:621.20px;font-size:9.8px;font-weight:400;color:#3c3c3c;transform:scaleX(0.8525);transform-origin:0 0;">CAP RATE</span>
<div class="a" style="left:778px;top:616.5px;width:234px;height:1px;background:#efefef"></div>
<span class="t" style="left:905.22px;top:601.20px;font-size:9.8px;font-weight:400;color:#16b98f;transform:scaleX(0.9485);transform-origin:100% 0;-webkit-text-stroke:0.400px #16b98f;">2.29%</span>
<span class="t" style="left:875.52px;top:601.20px;font-size:9.8px;font-weight:400;color:#3c3c3c;transform:scaleX(0.9178);transform-origin:100% 0;">Airbnb</span>
<span class="t" style="left:951.12px;top:601.20px;font-size:9.8px;font-weight:400;color:#3c3c3c;transform:scaleX(0.8217);transform-origin:0 0;">Trad.</span>
<span class="t" style="left:966.09px;top:601.20px;font-size:9.8px;font-weight:400;color:#16b98f;transform:scaleX(0.7649);transform-origin:100% 0;-webkit-text-stroke:0.400px #16b98f;">1.15%</span>
<span class="t" style="left:905.22px;top:621.20px;font-size:9.8px;font-weight:400;color:#7a7a7a;transform:scaleX(0.9485);transform-origin:100% 0;">6.27%</span>
<span class="t" style="left:875.52px;top:621.20px;font-size:9.8px;font-weight:400;color:#3c3c3c;transform:scaleX(0.9178);transform-origin:100% 0;">Airbnb</span>
<span class="t" style="left:948.58px;top:621.20px;font-size:9.8px;font-weight:400;color:#3c3c3c;transform:scaleX(0.8217);transform-origin:0 0;">Trad.</span>
<span class="t" style="left:968.64px;top:621.20px;font-size:9.8px;font-weight:400;color:#7a7a7a;transform:scaleX(0.9485);transform-origin:100% 0;">5.07%</span>
<div class="a" style="left:655px;top:643.5px;width:369px;height:1.500px;background:#e4e4e4"></div>
<div class="a" style="left:670.500px;top:653.5px;width:97.500px;height:90.500px;overflow:hidden;background:#777"><svg width="97.500" height="90.500" viewBox="0 0 97.500 90.500" style="display:block"><rect width="97.500" height="90.500" fill="#b5d0e8"/><g filter="url(#pb)"><rect x="0" y="0" width="98" height="60" fill="#b5d0e8"/><path d="M0 0 H22 L24 8 L16 20 L0 24 Z" fill="#2b3a26"/><ellipse cx="8" cy="6" rx="7" ry="5" fill="#3a4f2f"/><ellipse cx="16" cy="14" rx="5" ry="5" fill="#1f2b1c"/><path d="M58 0 H98 V36 L78 34 L66 20 Z" fill="#7a8238"/><ellipse cx="70" cy="6" rx="9" ry="6" fill="#a08c3c"/><ellipse cx="86" cy="12" rx="9" ry="8" fill="#6b7a30"/><ellipse cx="78" cy="24" rx="8" ry="7" fill="#b89a45"/><ellipse cx="92" cy="28" rx="6" ry="6" fill="#55682b"/><ellipse cx="64" cy="12" rx="4" ry="6" fill="#5a6a35"/><path d="M24 14 L32 2 L48 8 L56 4 L66 14 L74 28 V46 H24 Z" fill="#cdd2d6"/><path d="M24 14 L32 2 L48 8 L50 11 L34 6 L27 16 Z" fill="#4c525a"/><path d="M48 10 L56 4 L66 14 L63 15 L56 8 L50 13 Z" fill="#434950"/><rect x="33" y="19" width="16" height="16" fill="#383d44"/><rect x="52" y="24" width="10" height="13" fill="#3f444b"/><rect x="28" y="9" width="10" height="6" fill="#8fa2b5"/><rect x="53" y="12" width="7" height="6" fill="#9fb0c0"/><rect x="8" y="30" width="18" height="24" fill="#9b6c5c"/><rect x="4" y="20" width="5" height="36" fill="#8a8f95"/><rect x="20" y="22" width="3" height="32" fill="#c5c8cc"/><rect x="10" y="18" width="12" height="10" fill="#6f90b5"/><path d="M28 37 L48 34 L70 35 L98 31 V73 L72 67 L50 57 L28 53 Z" fill="#b56d33"/><path d="M50 36 L70 35 L72 66 L52 57 Z" fill="#c98743"/><path d="M72 35 L98 31 V50 L73 52 Z" fill="#a95f2c"/><path d="M54 40 L68 60 L64 62 L52 46 Z" fill="#e0a868"/><path d="M76 56 L98 52 V62 L80 64 Z" fill="#d09050"/><rect x="47" y="33" width="2.500" height="24" fill="#8f5528"/><rect x="70" y="33" width="2.500" height="34" fill="#8f5528"/><path d="M0 56 L28 52 L50 57 L72 67 L98 73 V91 H0 Z" fill="#465468"/><path d="M0 56 L28 52 L40 56 L10 66 L0 66 Z" fill="#8e99a3"/><ellipse cx="6" cy="52" rx="6" ry="4" fill="#4f6a3a"/><rect x="0" y="71" width="98" height="20" fill="#5a6a85"/></g></svg></div>
<div class="a" style="left:670.500px;top:724.0px;width:97.500px;height:20px;background:rgba(44,48,66,.76)"></div>
<span class="t" style="left:680.00px;top:727.17px;font-size:12.2px;font-weight:700;color:#fff;transform:scaleX(0.9244);transform-origin:0 0;">$565,000</span>
<svg class="a" style="left:672.500px;top:656.5px" width="15.500" height="13.500" viewBox="0 0 22 19"><path d="M11 17.600 L2.600 9.600 C0.200 7 0.800 3.400 3.200 1.900 C5.600 0.500 8.800 1.200 11 4.200 C13.200 1.200 16.400 0.500 18.800 1.900 C21.200 3.400 21.800 7 19.400 9.600 Z" fill="rgba(40,40,40,.35)" stroke="#fff" stroke-width="1.700" stroke-linejoin="round"/></svg>
<span class="t" style="left:778.50px;top:653.84px;font-size:12px;font-weight:400;color:#333;transform:scaleX(0.8723);transform-origin:0 0;">2711 S 5th St Unit A</span>
<span class="t" style="left:778.50px;top:667.84px;font-size:12px;font-weight:400;color:#2a9fd8;transform:scaleX(0.8943);transform-origin:0 0;-webkit-text-stroke:0.450px #2a9fd8;">Galindo</span>
<svg class="a" style="left:819.5px;top:669.0px" width="11" height="10" viewBox="0 0 22 20"><path d="M9 1.500 H5 C2.800 1.500 1.500 2.800 1.500 5 V15 C1.500 17.200 2.800 18.500 5 18.500 H9" fill="none" stroke="#2a9fd8" stroke-width="2.600" stroke-linecap="round"/><path d="M7.500 8 H14 V4 L21 10 L14 16 V12 H7.500 Z" fill="#2a9fd8"/></svg>
<span class="t" style="left:778.50px;top:685.88px;font-size:9.3px;font-weight:400;color:#4a4a4a;transform:scaleX(0.9178);transform-origin:0 0;">3 beds | 3 baths | 1560 sq.ft</span>
<span class="t" style="left:778.50px;top:710.70px;font-size:9.8px;font-weight:400;color:#3c3c3c;transform:scaleX(0.8816);transform-origin:0 0;">CASH ON CASH</span>
<span class="t" style="left:778.50px;top:730.70px;font-size:9.8px;font-weight:400;color:#3c3c3c;transform:scaleX(0.8525);transform-origin:0 0;">CAP RATE</span>
<div class="a" style="left:778px;top:726.0px;width:234px;height:1px;background:#efefef"></div>
<span class="t" style="left:905.22px;top:710.70px;font-size:9.8px;font-weight:400;color:#16b98f;transform:scaleX(0.9485);transform-origin:100% 0;-webkit-text-stroke:0.400px #16b98f;">2.62%</span>
<span class="t" style="left:875.52px;top:710.70px;font-size:9.8px;font-weight:400;color:#3c3c3c;transform:scaleX(0.9178);transform-origin:100% 0;">Airbnb</span>
<span class="t" style="left:951.12px;top:710.70px;font-size:9.8px;font-weight:400;color:#3c3c3c;transform:scaleX(0.8217);transform-origin:0 0;">Trad.</span>
<span class="t" style="left:966.09px;top:710.70px;font-size:9.8px;font-weight:400;color:#16b98f;transform:scaleX(0.7649);transform-origin:100% 0;-webkit-text-stroke:0.400px #16b98f;">1.01%</span>
<span class="t" style="left:905.22px;top:730.70px;font-size:9.8px;font-weight:400;color:#7a7a7a;transform:scaleX(0.9485);transform-origin:100% 0;">6.47%</span>
<span class="t" style="left:875.52px;top:730.70px;font-size:9.8px;font-weight:400;color:#3c3c3c;transform:scaleX(0.9178);transform-origin:100% 0;">Airbnb</span>
<span class="t" style="left:948.58px;top:730.70px;font-size:9.8px;font-weight:400;color:#3c3c3c;transform:scaleX(0.8217);transform-origin:0 0;">Trad.</span>
<span class="t" style="left:968.64px;top:730.70px;font-size:9.8px;font-weight:400;color:#7a7a7a;transform:scaleX(0.9485);transform-origin:100% 0;">5.27%</span>
<div class="a" style="left:655px;top:753.0px;width:369px;height:1.500px;background:#e4e4e4"></div>
<div class="a" style="left:670.500px;top:763.0px;width:97.500px;height:90.500px;overflow:hidden;background:#777"><svg width="97.500" height="90.500" viewBox="0 0 97.500 90.500" style="display:block"><rect width="97.500" height="90.500" fill="#1c1c1c"/><g filter="url(#pb)"><rect x="0" y="0" width="98" height="91" fill="#1c1c1c"/><ellipse cx="20" cy="3" rx="10" ry="3" fill="#555"/><ellipse cx="50" cy="2" rx="8" ry="2" fill="#6a6a6a"/><ellipse cx="80" cy="4" rx="10" ry="3" fill="#444"/></g></svg></div>
<div class="a" style="left:670.500px;top:833.5px;width:97.500px;height:20px;background:rgba(44,48,66,.76)"></div>
<span class="t" style="left:680.00px;top:836.67px;font-size:12.2px;font-weight:700;color:#fff;transform:scaleX(0.9244);transform-origin:0 0;">$500,000</span>
<svg class="a" style="left:672.500px;top:766.0px" width="15.500" height="13.500" viewBox="0 0 22 19"><path d="M11 17.600 L2.600 9.600 C0.200 7 0.800 3.400 3.200 1.900 C5.600 0.500 8.800 1.200 11 4.200 C13.200 1.200 16.400 0.500 18.800 1.900 C21.200 3.400 21.800 7 19.400 9.600 Z" fill="rgba(40,40,40,.35)" stroke="#fff" stroke-width="1.700" stroke-linejoin="round"/></svg>
<span class="t" style="left:778.50px;top:763.34px;font-size:12px;font-weight:400;color:#333;transform:scaleX(0.8653);transform-origin:0 0;">3526 Manzanar Dr</span>
<span class="t" style="left:778.50px;top:777.34px;font-size:12px;font-weight:400;color:#2a9fd8;transform:scaleX(0.8943);transform-origin:0 0;-webkit-text-stroke:0.450px #2a9fd8;">Galindo</span>
<svg class="a" style="left:819.5px;top:778.5px" width="11" height="10" viewBox="0 0 22 20"><path d="M9 1.500 H5 C2.800 1.500 1.500 2.800 1.500 5 V15 C1.500 17.200 2.800 18.500 5 18.500 H9" fill="none" stroke="#2a9fd8" stroke-width="2.600" stroke-linecap="round"/><path d="M7.500 8 H14 V4 L21 10 L14 16 V12 H7.500 Z" fill="#2a9fd8"/></svg>
<span class="t" style="left:778.50px;top:795.38px;font-size:9.3px;font-weight:400;color:#4a4a4a;transform:scaleX(0.9178);transform-origin:0 0;">3 beds | 2 baths | 1500 sq.ft</span>
<span class="t" style="left:778.50px;top:820.20px;font-size:9.8px;font-weight:400;color:#3c3c3c;transform:scaleX(0.8816);transform-origin:0 0;">CASH ON CASH</span>
<span class="t" style="left:778.50px;top:840.20px;font-size:9.8px;font-weight:400;color:#3c3c3c;transform:scaleX(0.8525);transform-origin:0 0;">CAP RATE</span>
<div class="a" style="left:778px;top:835.5px;width:234px;height:1px;background:#efefef"></div>
<span class="t" style="left:905.22px;top:820.20px;font-size:9.8px;font-weight:400;color:#16b98f;transform:scaleX(0.9485);transform-origin:100% 0;-webkit-text-stroke:0.400px #16b98f;">2.00%</span>
<span class="t" style="left:875.52px;top:820.20px;font-size:9.8px;font-weight:400;color:#3c3c3c;transform:scaleX(0.9178);transform-origin:100% 0;">Airbnb</span>
<span class="t" style="left:949.85px;top:820.20px;font-size:9.8px;font-weight:400;color:#3c3c3c;transform:scaleX(0.8217);transform-origin:0 0;">Trad.</span>
<span class="t" style="left:967.37px;top:820.20px;font-size:9.8px;font-weight:400;color:#16b98f;transform:scaleX(0.8567);transform-origin:100% 0;-webkit-text-stroke:0.400px #16b98f;">1.00%</span>
<span class="t" style="left:905.22px;top:840.20px;font-size:9.8px;font-weight:400;color:#7a7a7a;transform:scaleX(0.9485);transform-origin:100% 0;">6.00%</span>
<span class="t" style="left:875.52px;top:840.20px;font-size:9.8px;font-weight:400;color:#3c3c3c;transform:scaleX(0.9178);transform-origin:100% 0;">Airbnb</span>
<span class="t" style="left:948.58px;top:840.20px;font-size:9.8px;font-weight:400;color:#3c3c3c;transform:scaleX(0.8217);transform-origin:0 0;">Trad.</span>
<span class="t" style="left:968.64px;top:840.20px;font-size:9.8px;font-weight:400;color:#7a7a7a;transform:scaleX(0.9485);transform-origin:100% 0;">5.00%</span>
<div class="a" style="left:655px;top:862.5px;width:369px;height:1.500px;background:#e4e4e4"></div>
<div class="a" style="left:966.400px;top:726.300px;width:43.600px;height:43.600px;border-radius:50%;background:#1277bd;box-shadow:0 2px 6px rgba(0,0,0,.22)"></div>
<svg class="a" style="left:979px;top:739.200px" width="19.200" height="17.200" viewBox="0 0 19.200 17.200"><path fill-rule="evenodd" d="M0 17.200 V10.400 L2.300 1 Q2.600 0 3.600 0 H15.600 Q16.600 0 16.900 1 L19.200 10.400 V17.200 Z M4.600 2.300 L2.900 8.700 H6.700 A2.900 2.900 0 0 0 12.500 8.700 H16.300 L14.600 2.300 Z" fill="#fff"/></svg>
<div class="a" style="left:0;top:769px;width:1024px;height:43px;background:#030303"></div>
<div class="a" style="left:0;top:786px;width:1060px;height:26px;background:#1b1e22"></div>
<div class="a" style="left:1055.500px;top:560px;width:4.500px;height:252px;background:linear-gradient(rgba(30,33,36,0),#1e2124 55%)"></div>
<div class="a" style="left:-20px;top:769px;width:1075.500px;height:25.500px;background:#030303;border-radius:0 0 10px 0;border-bottom:1.500px solid #2e3134"></div>

</body></html>
